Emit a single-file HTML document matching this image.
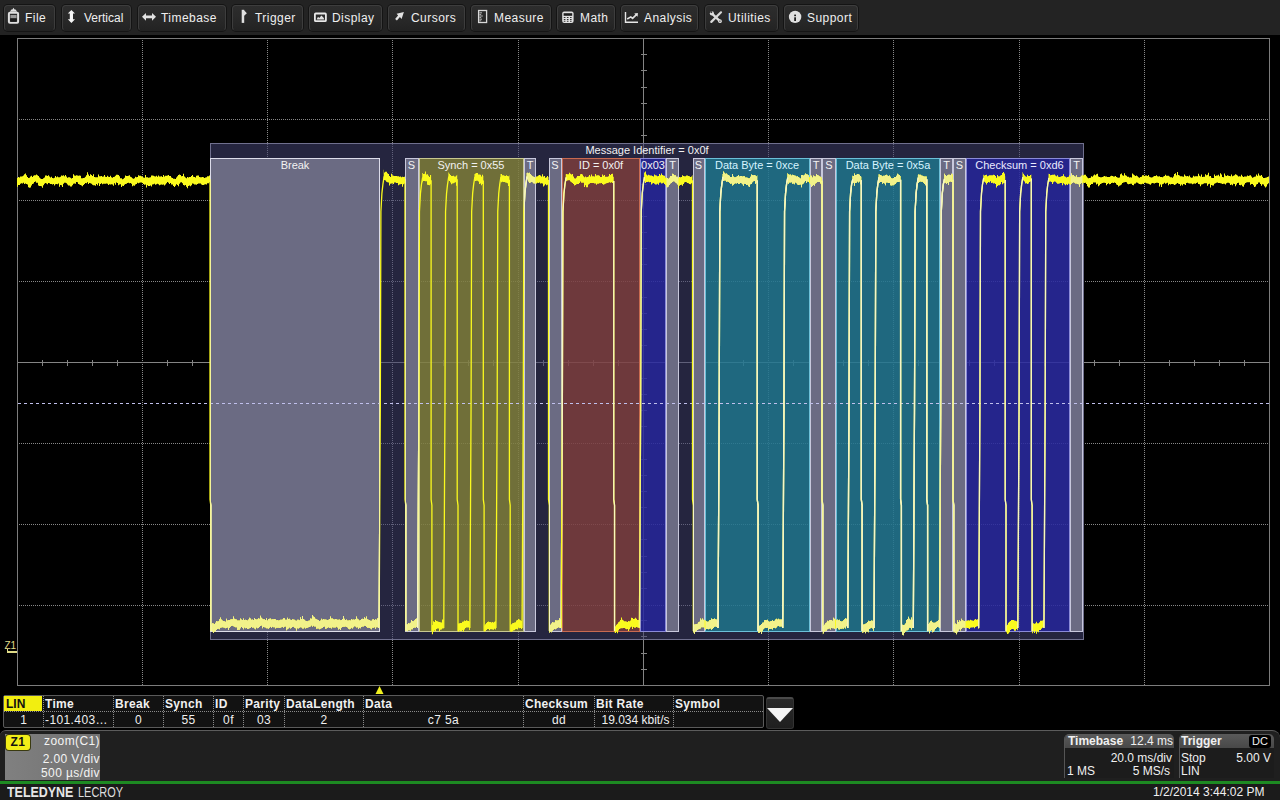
<!DOCTYPE html>
<html><head><meta charset="utf-8"><title>LeCroy LIN decode</title>
<style>
html,body{margin:0;padding:0;width:1280px;height:800px;overflow:hidden;background:#000;font-family:"Liberation Sans",sans-serif;}
#scope{position:absolute;left:0;top:0;}
#top{position:absolute;left:0;top:0;width:1280px;height:35px;background:#232323;}
.btn{position:absolute;top:5px;height:26px;box-sizing:border-box;border-radius:4px;background:linear-gradient(#2d2d2d,#282828 60%,#232323);border:1px solid #3d3d3d;border-bottom-color:#222;box-shadow:0 0 0 1px #141414;color:#efefef;font-size:12px;}
.btn span{position:absolute;left:22px;top:5px;white-space:nowrap;letter-spacing:0.45px;}
.btn svg{position:absolute;}
#tbl{position:absolute;left:3px;top:695px;width:761px;height:33px;box-sizing:border-box;border:1px solid #5a5a5a;border-radius:2px;background:#121212;color:#f0f0f0;font-size:12px;}
.c{position:absolute;top:0;height:31px;box-sizing:border-box;border-left:1px dotted #8a8a8a;}
.c b{position:absolute;left:1px;top:1px;white-space:nowrap;letter-spacing:0.3px;}
.c i{position:absolute;top:17px;font-style:normal;white-space:nowrap;letter-spacing:0.4px;}
#rowsep{position:absolute;left:0;right:0;top:15px;border-top:1px dotted #8a8a8a;}
#lin{position:absolute;left:0;top:0;width:38px;height:15px;background:#f2ee10;color:#111;}
#drop{position:absolute;left:766px;top:697px;width:28px;height:32px;box-sizing:border-box;border-radius:3px;background:linear-gradient(#2a2a2a,#1f1f1f);border:1px solid #333;border-top:2px solid #4a4a4a;}
#panel{position:absolute;left:0;top:730px;width:1280px;height:51px;background:#1f1f1f;border-top:1px solid #5c5c5c;border-radius:6px 8px 0 0;}
#green{position:absolute;left:0;top:781px;width:1280px;height:3px;background:#1d8a22;}
#foot{position:absolute;left:0;top:784px;width:1280px;height:16px;background:#1b1b1b;}
#z1{position:absolute;left:5px;top:734px;width:95px;height:46px;background:linear-gradient(90deg,#808080,#7a7a7a 40%,#727272);color:#f4f4f4;font-size:12px;letter-spacing:0.4px;}
#z1b{position:absolute;left:1px;top:1px;width:24px;height:15px;border-radius:3px;background:#f2ee18;color:#111;font-weight:bold;font-size:12px;text-align:center;line-height:15px;box-shadow:0 0 0 1px #3a3a10;}
.tx{position:absolute;white-space:nowrap;}
.box{position:absolute;top:734px;height:44px;border-radius:5px 5px 0 0;background:#1c1c1c;border-left:1px solid #555;box-sizing:border-box;overflow:hidden;font-size:12px;color:#f0f0f0;}
.hdr{position:absolute;left:0;top:0;right:0;height:14px;background:linear-gradient(#5a5a5a,#484848);}
</style></head><body>
<svg id="scope" width="1280" height="800" viewBox="0 0 1280 800" shape-rendering="crispEdges">
<g opacity="0.85"><line x1="142.5" y1="40" x2="142.5" y2="685" stroke="#a0a0a0" stroke-dasharray="1 1"/><line x1="267.5" y1="40" x2="267.5" y2="685" stroke="#a0a0a0" stroke-dasharray="1 1"/><line x1="392.5" y1="40" x2="392.5" y2="685" stroke="#a0a0a0" stroke-dasharray="1 1"/><line x1="518.5" y1="40" x2="518.5" y2="685" stroke="#a0a0a0" stroke-dasharray="1 1"/><line x1="643.5" y1="38" x2="643.5" y2="685" stroke="#9c9c9c"/><line x1="768.5" y1="40" x2="768.5" y2="685" stroke="#a0a0a0" stroke-dasharray="1 1"/><line x1="893.5" y1="40" x2="893.5" y2="685" stroke="#a0a0a0" stroke-dasharray="1 1"/><line x1="1019.5" y1="40" x2="1019.5" y2="685" stroke="#a0a0a0" stroke-dasharray="1 1"/><line x1="1144.5" y1="40" x2="1144.5" y2="685" stroke="#a0a0a0" stroke-dasharray="1 1"/><line x1="19" y1="119.5" x2="1269" y2="119.5" stroke="#a0a0a0" stroke-dasharray="1 1"/><line x1="19" y1="200.5" x2="1269" y2="200.5" stroke="#a0a0a0" stroke-dasharray="1 1"/><line x1="19" y1="281.5" x2="1269" y2="281.5" stroke="#a0a0a0" stroke-dasharray="1 1"/><line x1="17" y1="362.5" x2="1269" y2="362.5" stroke="#9c9c9c"/><line x1="19" y1="443.5" x2="1269" y2="443.5" stroke="#a0a0a0" stroke-dasharray="1 1"/><line x1="19" y1="524.5" x2="1269" y2="524.5" stroke="#a0a0a0" stroke-dasharray="1 1"/><line x1="19" y1="605.5" x2="1269" y2="605.5" stroke="#a0a0a0" stroke-dasharray="1 1"/><path d="M42.5,360 V366 M67.5,360 V366 M92.5,360 V366 M117.5,360 V366 M167.5,360 V366 M192.5,360 V366 M217.5,360 V366 M242.5,360 V366 M292.5,360 V366 M317.5,360 V366 M343.5,360 V366 M368.5,360 V366 M418.5,360 V366 M443.5,360 V366 M468.5,360 V366 M493.5,360 V366 M543.5,360 V366 M568.5,360 V366 M593.5,360 V366 M618.5,360 V366 M668.5,360 V366 M693.5,360 V366 M718.5,360 V366 M743.5,360 V366 M793.5,360 V366 M818.5,360 V366 M843.5,360 V366 M868.5,360 V366 M918.5,360 V366 M943.5,360 V366 M969.5,360 V366 M994.5,360 V366 M1044.5,360 V366 M1069.5,360 V366 M1094.5,360 V366 M1119.5,360 V366 M1169.5,360 V366 M1194.5,360 V366 M1219.5,360 V366 M1244.5,360 V366 M641,54.5 H646.5 M641,70.5 H646.5 M641,87.5 H646.5 M641,103.5 H646.5 M641,135.5 H646.5 M641,151.5 H646.5 M641,167.5 H646.5 M641,184.5 H646.5 M641,216.5 H646.5 M641,232.5 H646.5 M641,248.5 H646.5 M641,264.5 H646.5 M641,297.5 H646.5 M641,313.5 H646.5 M641,329.5 H646.5 M641,345.5 H646.5 M641,378.5 H646.5 M641,394.5 H646.5 M641,410.5 H646.5 M641,426.5 H646.5 M641,459.5 H646.5 M641,475.5 H646.5 M641,491.5 H646.5 M641,507.5 H646.5 M641,539.5 H646.5 M641,556.5 H646.5 M641,572.5 H646.5 M641,588.5 H646.5 M641,620.5 H646.5 M641,636.5 H646.5 M641,653.5 H646.5 M641,669.5 H646.5" stroke="#9c9c9c" fill="none"/></g>
<rect x="210.5" y="143.5" width="873" height="496" fill="#434373" fill-opacity="0.55" stroke="#70708e"/><rect x="210.5" y="158.5" width="169" height="473" fill="#6b6b83" fill-opacity="1.0" stroke="#dcdcea"/><rect x="405.5" y="158.5" width="13" height="473" fill="#6b6b83" fill-opacity="1.0" stroke="#c8c8dc"/><rect x="419.5" y="158.5" width="103.5" height="473" fill="#8d8c38" fill-opacity="0.72" stroke="#c8c890"/><rect x="524" y="158.5" width="11.5" height="473" fill="#6b6b83" fill-opacity="1.0" stroke="#c8c8dc"/><rect x="549" y="158.5" width="12" height="473" fill="#6b6b83" fill-opacity="1.0" stroke="#c8c8dc"/><rect x="562" y="158.5" width="77.5" height="473" fill="#8a413c" fill-opacity="0.72" stroke="#c86a50"/><rect x="640.5" y="158.5" width="25" height="473" fill="#2626aa" fill-opacity="0.72" stroke="#8a8ad8"/><rect x="666.5" y="158.5" width="12" height="473" fill="#6b6b83" fill-opacity="1.0" stroke="#c8c8dc"/><rect x="693" y="158.5" width="11.5" height="473" fill="#6b6b83" fill-opacity="1.0" stroke="#c8c8dc"/><rect x="705.5" y="158.5" width="103.5" height="473" fill="#1d8299" fill-opacity="0.72" stroke="#6cc0d8"/><rect x="810" y="158.5" width="11.5" height="473" fill="#6b6b83" fill-opacity="1.0" stroke="#c8c8dc"/><rect x="822.5" y="158.5" width="12.5" height="473" fill="#6b6b83" fill-opacity="1.0" stroke="#c8c8dc"/><rect x="836" y="158.5" width="103.5" height="473" fill="#1d8299" fill-opacity="0.72" stroke="#6cc0d8"/><rect x="940.5" y="158.5" width="12" height="473" fill="#6b6b83" fill-opacity="1.0" stroke="#c8c8dc"/><rect x="953.5" y="158.5" width="12" height="473" fill="#6b6b83" fill-opacity="1.0" stroke="#c8c8dc"/><rect x="966.5" y="158.5" width="103" height="473" fill="#2626aa" fill-opacity="0.72" stroke="#8a8ad8"/><rect x="1070.5" y="158.5" width="12" height="473" fill="#6b6b83" fill-opacity="1.0" stroke="#c8c8dc"/>
<line x1="18" y1="403.5" x2="1269" y2="403.5" stroke="#c0c0ec" stroke-dasharray="3 3"/>
<rect x="17.5" y="38.5" width="1252" height="647" fill="none" stroke="#7c7c7c"/>
<defs><path id="tb" d="M17,177.89 L18,177.89 L18,176.98 L19,176.98 L19,177.55 L20,177.55 L20,176.39 L21,176.39 L21,176.4 L22,176.4 L22,176.19 L23,176.19 L23,175.51 L24,175.51 L24,174.15 L25,174.15 L25,173.59 L26,173.59 L26,175.23 L27,175.23 L27,176.94 L28,176.94 L28,177.99 L29,177.99 L29,177.87 L30,177.87 L30,176.59 L31,176.59 L31,175.74 L32,175.74 L32,176.94 L33,176.94 L33,175.68 L34,175.68 L34,175.16 L35,175.16 L35,175.14 L36,175.14 L36,174.59 L37,174.59 L37,175.32 L38,175.32 L38,175.88 L39,175.88 L39,177.52 L40,177.52 L40,178.48 L41,178.48 L41,179.06 L42,179.06 L42,178.93 L43,178.93 L43,178.29 L44,178.29 L44,177.61 L45,177.61 L45,175.41 L46,175.41 L46,175.4 L47,175.4 L47,175.88 L48,175.88 L48,175.19 L49,175.19 L49,176.58 L50,176.58 L50,177.57 L51,177.57 L51,176.77 L52,176.77 L52,178.1 L53,178.1 L53,178.31 L54,178.31 L54,177.7 L55,177.7 L55,176.1 L56,176.1 L56,177.3 L57,177.3 L57,176.44 L58,176.44 L58,177.22 L59,177.22 L59,177.24 L60,177.24 L60,176.72 L61,176.72 L61,175.59 L62,175.59 L62,175.63 L63,175.63 L63,175.37 L64,175.37 L64,176.32 L65,176.32 L65,175.1 L66,175.1 L66,176.6 L67,176.6 L67,177.67 L68,177.67 L68,177.34 L69,177.34 L69,177.22 L70,177.22 L70,177.7 L71,177.7 L71,178.48 L72,178.48 L72,178.07 L73,178.07 L73,174.34 L74,174.34 L74,175.61 L75,175.61 L75,175.84 L76,175.84 L76,175.18 L77,175.18 L77,175.49 L78,175.49 L78,175.81 L79,175.81 L79,175.61 L80,175.61 L80,175.82 L81,175.82 L81,178.37 L82,178.37 L82,178.3 L83,178.3 L83,177.98 L84,177.98 L84,177.64 L85,177.64 L85,176.75 L86,176.75 L86,175.24 L87,175.24 L87,172.15 L88,172.15 L88,174.48 L89,174.48 L89,175.97 L90,175.97 L90,174.21 L91,174.21 L91,174.89 L92,174.89 L92,176.09 L93,176.09 L93,174.36 L94,174.36 L94,176.99 L95,176.99 L95,177.33 L96,177.33 L96,177.23 L97,177.23 L97,177.37 L98,177.37 L98,174.5 L99,174.5 L99,176.15 L100,176.15 L100,176.28 L101,176.28 L101,176.11 L102,176.11 L102,176.76 L103,176.76 L103,176.59 L104,176.59 L104,175.04 L105,175.04 L105,176.72 L106,176.72 L106,177.1 L107,177.1 L107,175.71 L108,175.71 L108,176.78 L109,176.78 L109,176.97 L110,176.97 L110,175.84 L111,175.84 L111,177.36 L112,177.36 L112,177.75 L113,177.75 L113,176.98 L114,176.98 L114,176.74 L115,176.74 L115,175.67 L116,175.67 L116,174.7 L117,174.7 L117,174.69 L118,174.69 L118,175.09 L119,175.09 L119,176.29 L120,176.29 L120,178.16 L121,178.16 L121,178.18 L122,178.18 L122,179.15 L123,179.15 L123,178.76 L124,178.76 L124,177.74 L125,177.74 L125,175.56 L126,175.56 L126,176.11 L127,176.11 L127,175.88 L128,175.88 L128,175.79 L129,175.79 L129,175.25 L130,175.25 L130,176.82 L131,176.82 L131,177.29 L132,177.29 L132,178.28 L133,178.28 L133,178.87 L134,178.87 L134,178.36 L135,178.36 L135,176.73 L136,176.73 L136,177.37 L137,177.37 L137,177.08 L138,177.08 L138,175.34 L139,175.34 L139,175.8 L140,175.8 L140,175.67 L141,175.67 L141,176.28 L142,176.28 L142,176.69 L143,176.69 L143,177.45 L144,177.45 L144,177.75 L145,177.75 L145,174.89 L146,174.89 L146,177.33 L147,177.33 L147,177.33 L148,177.33 L148,177.66 L149,177.66 L149,177.54 L150,177.54 L150,177.37 L151,177.37 L151,175.62 L152,175.62 L152,175.45 L153,175.45 L153,175.64 L154,175.64 L154,176.2 L155,176.2 L155,176.4 L156,176.4 L156,175.85 L157,175.85 L157,176.71 L158,176.71 L158,175.46 L159,175.46 L159,176.38 L160,176.38 L160,176.44 L161,176.44 L161,176.27 L162,176.27 L162,177.03 L163,177.03 L163,175.03 L164,175.03 L164,176.39 L165,176.39 L165,175.63 L166,175.63 L166,175.84 L167,175.84 L167,175.54 L168,175.54 L168,175.02 L169,175.02 L169,176.06 L170,176.06 L170,176.04 L171,176.04 L171,177.53 L172,177.53 L172,177.94 L173,177.94 L173,178.65 L174,178.65 L174,178.73 L175,178.73 L175,178.9 L176,178.9 L176,177.54 L177,177.54 L177,176.33 L178,176.33 L178,175.12 L179,175.12 L179,174.52 L180,174.52 L180,175.09 L181,175.09 L181,176.28 L182,176.28 L182,176.02 L183,176.02 L183,173.83 L184,173.83 L184,176.54 L185,176.54 L185,177.54 L186,177.54 L186,178.25 L187,178.25 L187,177.09 L188,177.09 L188,177.54 L189,177.54 L189,177.1 L190,177.1 L190,176.9 L191,176.9 L191,176.04 L192,176.04 L192,174.97 L193,174.97 L193,176.76 L194,176.76 L194,176.93 L195,176.93 L195,177.52 L196,177.52 L196,175.87 L197,175.87 L197,175.45 L198,175.45 L198,175.57 L199,175.57 L199,176.9 L200,176.9 L200,177.17 L201,177.17 L201,177.34 L202,177.34 L202,177.04 L203,177.04 L203,177.16 L204,177.16 L204,177.94 L205,177.94 L205,177.55 L206,177.55 L206,177.24 L207,177.24 L207,176.24 L208,176.24 L208,176.22 L209,176.22 L209,175.41 L210,175.41 L210,182.37 L209,182.37 L209,183.37 L208,183.37 L208,183.26 L207,183.26 L207,184.42 L206,184.42 L206,184.16 L205,184.16 L205,184.38 L204,184.38 L204,184.96 L203,184.96 L203,184.94 L202,184.94 L202,184.59 L201,184.59 L201,183.47 L200,183.47 L200,183.4 L199,183.4 L199,183.52 L198,183.52 L198,183.88 L197,183.88 L197,184.65 L196,184.65 L196,184.62 L195,184.62 L195,184.52 L194,184.52 L194,183.8 L193,183.8 L193,183.54 L192,183.54 L192,185.13 L191,185.13 L191,186.13 L190,186.13 L190,185.43 L189,185.43 L189,185.89 L188,185.89 L188,188.37 L187,188.37 L187,186.63 L186,186.63 L186,184.97 L185,184.97 L185,185.55 L184,185.55 L184,185.02 L183,185.02 L183,183.16 L182,183.16 L182,182.32 L181,182.32 L181,182.4 L180,182.4 L180,183.72 L179,183.72 L179,186.23 L178,186.23 L178,185.09 L177,185.09 L177,184.34 L176,184.34 L176,185.65 L175,185.65 L175,187.1 L174,187.1 L174,186 L173,186 L173,184.5 L172,184.5 L172,184.48 L171,184.48 L171,183.09 L170,183.09 L170,184.05 L169,184.05 L169,182.87 L168,182.87 L168,182.08 L167,182.08 L167,183.2 L166,183.2 L166,184.56 L165,184.56 L165,185.61 L164,185.61 L164,184.52 L163,184.52 L163,184.75 L162,184.75 L162,184.56 L161,184.56 L161,184.7 L160,184.7 L160,185.36 L159,185.36 L159,184.13 L158,184.13 L158,183.64 L157,183.64 L157,184.19 L156,184.19 L156,184.85 L155,184.85 L155,183.67 L154,183.67 L154,184.14 L153,184.14 L153,184.5 L152,184.5 L152,186.42 L151,186.42 L151,185.58 L150,185.58 L150,185.94 L149,185.94 L149,185.94 L148,185.94 L148,185.28 L147,185.28 L147,187.6 L146,187.6 L146,184.41 L145,184.41 L145,184.75 L144,184.75 L144,183.92 L143,183.92 L143,182.93 L142,182.93 L142,182.38 L141,182.38 L141,182.38 L140,182.38 L140,182.69 L139,182.69 L139,183.16 L138,183.16 L138,182.74 L137,182.74 L137,183.88 L136,183.88 L136,184.48 L135,184.48 L135,185.66 L134,185.66 L134,185.44 L133,185.44 L133,186.35 L132,186.35 L132,183.8 L131,183.8 L131,183.05 L130,183.05 L130,183.27 L129,183.27 L129,182.73 L128,182.73 L128,183.09 L127,183.09 L127,183.76 L126,183.76 L126,183.88 L125,183.88 L125,184.77 L124,184.77 L124,185.94 L123,185.94 L123,185.71 L122,185.71 L122,186.88 L121,186.88 L121,184.3 L120,184.3 L120,184.4 L119,184.4 L119,185.33 L118,185.33 L118,182.93 L117,182.93 L117,182.6 L116,182.6 L116,184.87 L115,184.87 L115,183.37 L114,183.37 L114,185.86 L113,185.86 L113,184.61 L112,184.61 L112,184.33 L111,184.33 L111,184.54 L110,184.54 L110,184.16 L109,184.16 L109,185.12 L108,185.12 L108,183.74 L107,183.74 L107,183.42 L106,183.42 L106,183.82 L105,183.82 L105,183.74 L104,183.74 L104,183.67 L103,183.67 L103,184.2 L102,184.2 L102,183.31 L101,183.31 L101,184.06 L100,184.06 L100,186.01 L99,186.01 L99,183.36 L98,183.36 L98,185.16 L97,185.16 L97,184.07 L96,184.07 L96,185.81 L95,185.81 L95,185.23 L94,185.23 L94,185.21 L93,185.21 L93,184.84 L92,184.84 L92,183.84 L91,183.84 L91,183.35 L90,183.35 L90,182.89 L89,182.89 L89,183.91 L88,183.91 L88,182.26 L87,182.26 L87,183.24 L86,183.24 L86,183 L85,183 L85,184.01 L84,184.01 L84,184.99 L83,184.99 L83,186.29 L82,186.29 L82,185.39 L81,185.39 L81,185.02 L80,185.02 L80,184.58 L79,184.58 L79,184.08 L78,184.08 L78,182.25 L77,182.25 L77,182.12 L76,182.12 L76,183.68 L75,183.68 L75,183.6 L74,183.6 L74,183.74 L73,183.74 L73,185.25 L72,185.25 L72,186.52 L71,186.52 L71,186.42 L70,186.42 L70,185.55 L69,185.55 L69,185.38 L68,185.38 L68,184.39 L67,184.39 L67,183.23 L66,183.23 L66,182.7 L65,182.7 L65,182.63 L64,182.63 L64,183.66 L63,183.66 L63,186.95 L62,186.95 L62,185.3 L61,185.3 L61,185.07 L60,185.07 L60,186.66 L59,186.66 L59,183.58 L58,183.58 L58,184.13 L57,184.13 L57,183.94 L56,183.94 L56,184.16 L55,184.16 L55,185.56 L54,185.56 L54,184.08 L53,184.08 L53,184.5 L52,184.5 L52,183.99 L51,183.99 L51,184.02 L50,184.02 L50,183.25 L49,183.25 L49,183.08 L48,183.08 L48,184.3 L47,184.3 L47,183.61 L46,183.61 L46,182.9 L45,182.9 L45,183.87 L44,183.87 L44,185.19 L43,185.19 L43,187.74 L42,187.74 L42,186.21 L41,186.21 L41,185.97 L40,185.97 L40,185.89 L39,185.89 L39,185.54 L38,185.54 L38,182.84 L37,182.84 L37,182.85 L36,182.85 L36,181.53 L35,181.53 L35,182.12 L34,182.12 L34,183.44 L33,183.44 L33,183.97 L32,183.97 L32,185.55 L31,185.55 L31,187.4 L30,187.4 L30,187.69 L29,187.69 L29,187.23 L28,187.23 L28,184.61 L27,184.61 L27,183.97 L26,183.97 L26,183.56 L25,183.56 L25,184.1 L24,184.1 L24,182.63 L23,182.63 L23,183.58 L22,183.58 L22,183.14 L21,183.14 L21,183.74 L20,183.74 L20,184.98 L19,184.98 L19,185.12 L18,185.12 L18,186.64 L17,186.64Z M210.8,624.4 L211,624.4 L211,624.39 L212,624.39 L212,623.33 L213,623.33 L213,623.38 L214,623.38 L214,623.96 L215,623.96 L215,622.84 L216,622.84 L216,621.07 L217,621.07 L217,621.47 L218,621.47 L218,621.13 L219,621.13 L219,619.25 L220,619.25 L220,617.53 L221,617.53 L221,619.42 L222,619.42 L222,620.55 L223,620.55 L223,621.04 L224,621.04 L224,621.35 L225,621.35 L225,621.67 L226,621.67 L226,618.78 L227,618.78 L227,620.49 L228,620.49 L228,619.9 L229,619.9 L229,619.98 L230,619.98 L230,619.58 L231,619.58 L231,619.25 L232,619.25 L232,619.37 L233,619.37 L233,616.45 L234,616.45 L234,618.84 L235,618.84 L235,619.29 L236,619.29 L236,619.54 L237,619.54 L237,620.56 L238,620.56 L238,620.55 L239,620.55 L239,620.47 L240,620.47 L240,618.6 L241,618.6 L241,619.5 L242,619.5 L242,620.04 L243,620.04 L243,618.55 L244,618.55 L244,619.89 L245,619.89 L245,619.73 L246,619.73 L246,620 L247,620 L247,620.47 L248,620.47 L248,619.59 L249,619.59 L249,617.71 L250,617.71 L250,618.61 L251,618.61 L251,619.71 L252,619.71 L252,619.42 L253,619.42 L253,619.99 L254,619.99 L254,617.96 L255,617.96 L255,618.91 L256,618.91 L256,619.38 L257,619.38 L257,619.35 L258,619.35 L258,618.2 L259,618.2 L259,618.84 L260,618.84 L260,615.69 L261,615.69 L261,617.87 L262,617.87 L262,618.87 L263,618.87 L263,619.14 L264,619.14 L264,619.26 L265,619.26 L265,619.98 L266,619.98 L266,618.23 L267,618.23 L267,620.45 L268,620.45 L268,618.94 L269,618.94 L269,618.79 L270,618.79 L270,618.41 L271,618.41 L271,619.49 L272,619.49 L272,619.14 L273,619.14 L273,619.19 L274,619.19 L274,618.95 L275,618.95 L275,619.19 L276,619.19 L276,620.15 L277,620.15 L277,619.88 L278,619.88 L278,620.57 L279,620.57 L279,620.35 L280,620.35 L280,619.7 L281,619.7 L281,619.69 L282,619.69 L282,619.48 L283,619.48 L283,618.27 L284,618.27 L284,618.31 L285,618.31 L285,619.67 L286,619.67 L286,619.71 L287,619.71 L287,617.7 L288,617.7 L288,619 L289,619 L289,618.78 L290,618.78 L290,619.74 L291,619.74 L291,619.9 L292,619.9 L292,619.35 L293,619.35 L293,619.44 L294,619.44 L294,619.77 L295,619.77 L295,620.54 L296,620.54 L296,620.72 L297,620.72 L297,619.77 L298,619.77 L298,619.86 L299,619.86 L299,620.36 L300,620.36 L300,617.17 L301,617.17 L301,619 L302,619 L302,615.95 L303,615.95 L303,618.91 L304,618.91 L304,619.78 L305,619.78 L305,620.7 L306,620.7 L306,620.98 L307,620.98 L307,621.22 L308,621.22 L308,620.74 L309,620.74 L309,620.51 L310,620.51 L310,618.56 L311,618.56 L311,618.63 L312,618.63 L312,614.99 L313,614.99 L313,616.57 L314,616.57 L314,617.23 L315,617.23 L315,618.65 L316,618.65 L316,619.22 L317,619.22 L317,619.81 L318,619.81 L318,620.04 L319,620.04 L319,620.9 L320,620.9 L320,620.5 L321,620.5 L321,618.75 L322,618.75 L322,619.7 L323,619.7 L323,619.07 L324,619.07 L324,619.49 L325,619.49 L325,619.54 L326,619.54 L326,619.74 L327,619.74 L327,619.88 L328,619.88 L328,619.68 L329,619.68 L329,619.04 L330,619.04 L330,616.42 L331,616.42 L331,618.58 L332,618.58 L332,618.54 L333,618.54 L333,619.28 L334,619.28 L334,619.49 L335,619.49 L335,619.08 L336,619.08 L336,619.13 L337,619.13 L337,619.63 L338,619.63 L338,619.87 L339,619.87 L339,619.59 L340,619.59 L340,620.23 L341,620.23 L341,620.12 L342,620.12 L342,619.07 L343,619.07 L343,615.93 L344,615.93 L344,618.85 L345,618.85 L345,619.98 L346,619.98 L346,619.56 L347,619.56 L347,620.62 L348,620.62 L348,620.49 L349,620.49 L349,620.37 L350,620.37 L350,620.49 L351,620.49 L351,619.11 L352,619.11 L352,619.83 L353,619.83 L353,619.38 L354,619.38 L354,619.76 L355,619.76 L355,619.07 L356,619.07 L356,616.46 L357,616.46 L357,618.66 L358,618.66 L358,619.46 L359,619.46 L359,620.55 L360,620.55 L360,620 L361,620 L361,618.98 L362,618.98 L362,618.75 L363,618.75 L363,618.92 L364,618.92 L364,617.19 L365,617.19 L365,618.58 L366,618.58 L366,616.54 L367,616.54 L367,619.19 L368,619.19 L368,619.63 L369,619.63 L369,620 L370,620 L370,620.66 L371,620.66 L371,620.63 L372,620.63 L372,619.51 L373,619.51 L373,619.27 L374,619.27 L374,620.01 L375,620.01 L375,619.28 L376,619.28 L376,619.81 L377,619.81 L377,618.28 L378,618.28 L378,618.21 L379,618.21 L379,619.33 L379.1,619.33 L379.1,628.54 L379,628.54 L379,627.78 L378,627.78 L378,627.22 L377,627.22 L377,627.22 L376,627.22 L376,628.89 L375,628.89 L375,627.32 L374,627.32 L374,627.83 L373,627.83 L373,627.76 L372,627.76 L372,629.26 L371,629.26 L371,628.43 L370,628.43 L370,627.94 L369,627.94 L369,627.7 L368,627.7 L368,627.78 L367,627.78 L367,626.97 L366,626.97 L366,626.1 L365,626.1 L365,625.66 L364,625.66 L364,626.38 L363,626.38 L363,626.56 L362,626.56 L362,627.06 L361,627.06 L361,628.33 L360,628.33 L360,627.77 L359,627.77 L359,629.06 L358,629.06 L358,627.26 L357,627.26 L357,627.48 L356,627.48 L356,626.59 L355,626.59 L355,626.33 L354,626.33 L354,627.33 L353,627.33 L353,628.62 L352,628.62 L352,627.71 L351,627.71 L351,628.69 L350,628.69 L350,629.15 L349,629.15 L349,628.85 L348,628.85 L348,627.57 L347,627.57 L347,627.12 L346,627.12 L346,626.51 L345,626.51 L345,626.67 L344,626.67 L344,626.79 L343,626.79 L343,626.9 L342,626.9 L342,627.8 L341,627.8 L341,630.05 L340,630.05 L340,628.65 L339,628.65 L339,629.52 L338,629.52 L338,627.55 L337,627.55 L337,626.86 L336,626.86 L336,627.46 L335,627.46 L335,627.61 L334,627.61 L334,627.38 L333,627.38 L333,627.17 L332,627.17 L332,628.41 L331,628.41 L331,627.76 L330,627.76 L330,627.98 L329,627.98 L329,627.35 L328,627.35 L328,627.96 L327,627.96 L327,628.44 L326,628.44 L326,628.82 L325,628.82 L325,626.56 L324,626.56 L324,626.93 L323,626.93 L323,627.93 L322,627.93 L322,628.27 L321,628.27 L321,628.7 L320,628.7 L320,629.31 L319,629.31 L319,628.41 L318,628.41 L318,628.46 L317,628.46 L317,628.68 L316,628.68 L316,626.43 L315,626.43 L315,626.56 L314,626.56 L314,625.67 L313,625.67 L313,626.78 L312,626.78 L312,625.57 L311,625.57 L311,626.44 L310,626.44 L310,627.09 L309,627.09 L309,627.33 L308,627.33 L308,627.87 L307,627.87 L307,627.95 L306,627.95 L306,628.41 L305,628.41 L305,627.52 L304,627.52 L304,628.52 L303,628.52 L303,628.51 L302,628.51 L302,627.41 L301,627.41 L301,627.31 L300,627.31 L300,627.64 L299,627.64 L299,628.47 L298,628.47 L298,628.19 L297,628.19 L297,630.43 L296,630.43 L296,628.15 L295,628.15 L295,627.68 L294,627.68 L294,626.71 L293,626.71 L293,626.94 L292,626.94 L292,628.03 L291,628.03 L291,628.49 L290,628.49 L290,627.5 L289,627.5 L289,628.52 L288,628.52 L288,629.36 L287,629.36 L287,630.24 L286,630.24 L286,626.55 L285,626.55 L285,626.69 L284,626.69 L284,627.84 L283,627.84 L283,627.01 L282,627.01 L282,627.3 L281,627.3 L281,627.71 L280,627.71 L280,628.04 L279,628.04 L279,627.79 L278,627.79 L278,627.82 L277,627.82 L277,627.66 L276,627.66 L276,628.53 L275,628.53 L275,627.19 L274,627.19 L274,627.19 L273,627.19 L273,626.63 L272,626.63 L272,628.12 L271,628.12 L271,626.72 L270,626.72 L270,627.79 L269,627.79 L269,628.66 L268,628.66 L268,628.21 L267,628.21 L267,628.17 L266,628.17 L266,627.62 L265,627.62 L265,627.3 L264,627.3 L264,626.94 L263,626.94 L263,628.21 L262,628.21 L262,625.54 L261,625.54 L261,626.11 L260,626.11 L260,627.03 L259,627.03 L259,628.06 L258,628.06 L258,628.27 L257,628.27 L257,627.61 L256,627.61 L256,629.22 L255,629.22 L255,628.4 L254,628.4 L254,627.5 L253,627.5 L253,627.63 L252,627.63 L252,627.1 L251,627.1 L251,628 L250,628 L250,628.15 L249,628.15 L249,628.69 L248,628.69 L248,628.97 L247,628.97 L247,627.92 L246,627.92 L246,628.36 L245,628.36 L245,627.57 L244,627.57 L244,629.35 L243,629.35 L243,627.91 L242,627.91 L242,626.98 L241,626.98 L241,628.27 L240,628.27 L240,629.74 L239,629.74 L239,629.66 L238,629.66 L238,630.06 L237,630.06 L237,627.2 L236,627.2 L236,627.24 L235,627.24 L235,626.75 L234,626.75 L234,626.17 L233,626.17 L233,625.77 L232,625.77 L232,626.02 L231,626.02 L231,626.75 L230,626.75 L230,627.96 L229,627.96 L229,629.94 L228,629.94 L228,627.62 L227,627.62 L227,628.08 L226,628.08 L226,628.16 L225,628.16 L225,627.81 L224,627.81 L224,627.57 L223,627.57 L223,627.24 L222,627.24 L222,627.6 L221,627.6 L221,627.78 L220,627.78 L220,629.27 L219,629.27 L219,628.79 L218,628.79 L218,629.11 L217,629.11 L217,630.1 L216,630.1 L216,631.28 L215,631.28 L215,631.5 L214,631.5 L214,632.8 L213,632.8 L213,631.38 L212,631.38 L212,631.01 L211,631.01 L211,631.39 L210.8,631.39Z M383.7,169.78 L384,169.78 L384,172.59 L385,172.59 L385,171.76 L386,171.76 L386,171.68 L387,171.68 L387,173.31 L388,173.31 L388,173.95 L389,173.95 L389,175.94 L390,175.94 L390,176.9 L391,176.9 L391,173.81 L392,173.81 L392,175.35 L393,175.35 L393,175.74 L394,175.74 L394,176.03 L395,176.03 L395,175.91 L396,175.91 L396,175.96 L397,175.96 L397,176.32 L398,176.32 L398,176.31 L399,176.31 L399,176.81 L400,176.81 L400,176.53 L401,176.53 L401,177.14 L402,177.14 L402,176.86 L403,176.86 L403,176.91 L404,176.91 L404,176.66 L405,176.66 L405,183.62 L404,183.62 L404,184.13 L403,184.13 L403,186.64 L402,186.64 L402,183.92 L401,183.92 L401,184.27 L400,184.27 L400,184.5 L399,184.5 L399,185.2 L398,185.2 L398,183.12 L397,183.12 L397,182.97 L396,182.97 L396,182.42 L395,182.42 L395,182.49 L394,182.49 L394,184.02 L393,184.02 L393,183.38 L392,183.38 L392,183.38 L391,183.38 L391,183.71 L390,183.71 L390,185.54 L389,185.54 L389,182.44 L388,182.44 L388,182.13 L387,182.13 L387,181.7 L386,181.7 L386,180.47 L385,180.47 L385,179.93 L384,179.93 L384,181.44 L383.7,181.44Z M405.8,624.87 L406,624.87 L406,624.52 L407,624.52 L407,624.14 L408,624.14 L408,623.12 L409,623.12 L409,623.38 L410,623.38 L410,622.7 L411,622.7 L411,620.11 L412,620.11 L412,621.1 L413,621.1 L413,621.33 L414,621.33 L414,620.23 L415,620.23 L415,619.02 L416,619.02 L416,618.6 L417,618.6 L417,620.1 L417.65,620.1 L417.65,627.05 L417,627.05 L417,627.11 L416,627.11 L416,627.73 L415,627.73 L415,627.4 L414,627.4 L414,628.09 L413,628.09 L413,629.37 L412,629.37 L412,629.33 L411,629.33 L411,630.63 L410,630.63 L410,630.22 L409,630.22 L409,630.3 L408,630.3 L408,631.24 L407,631.24 L407,630.94 L406,630.94 L406,631.4 L405.8,631.4Z M422.25,172.93 L423,172.93 L423,174.08 L424,174.08 L424,173.81 L425,173.81 L425,171.47 L426,171.47 L426,174.38 L427,174.38 L427,174.33 L428,174.33 L428,175.87 L429,175.87 L429,176.95 L430,176.95 L430,175.08 L431,175.08 L431,175.15 L431.1,175.15 L431.1,186.15 L431,186.15 L431,184.37 L430,184.37 L430,185.2 L429,185.2 L429,184.97 L428,184.97 L428,184.69 L427,184.69 L427,181.19 L426,181.19 L426,181.18 L425,181.18 L425,181 L424,181 L424,181.1 L423,181.1 L423,182.37 L422.25,182.37Z M431.9,624.64 L432,624.64 L432,625.05 L433,625.05 L433,621.21 L434,621.21 L434,621.96 L435,621.96 L435,620.03 L436,620.03 L436,621.02 L437,621.02 L437,621.34 L438,621.34 L438,621.74 L439,621.74 L439,622 L440,622 L440,622.28 L441,622.28 L441,622.57 L442,622.57 L442,619.4 L443,619.4 L443,619.96 L443.75,619.96 L443.75,628.38 L443,628.38 L443,628.6 L442,628.6 L442,629.43 L441,629.43 L441,629.82 L440,629.82 L440,631.22 L439,631.22 L439,628.56 L438,628.56 L438,628.4 L437,628.4 L437,628.98 L436,628.98 L436,631.21 L435,631.21 L435,630.4 L434,630.4 L434,631.83 L433,631.83 L433,634.13 L432,634.13 L432,634.41 L431.9,634.41Z M448.35,172.5 L449,172.5 L449,173.73 L450,173.73 L450,174.91 L451,174.91 L451,176.02 L452,176.02 L452,176.02 L453,176.02 L453,175.78 L454,175.78 L454,176.39 L455,176.39 L455,176.43 L456,176.43 L456,175.58 L457,175.58 L457,174.7 L457.2,174.7 L457.2,183.15 L457,183.15 L457,185.71 L456,185.71 L456,182.25 L455,182.25 L455,182.65 L454,182.65 L454,183.33 L453,183.33 L453,183.38 L452,183.38 L452,184.19 L451,184.19 L451,182.51 L450,182.51 L450,180.89 L449,180.89 L449,179.93 L448.35,179.93Z M458,623.41 L459,623.41 L459,623.25 L460,623.25 L460,623.02 L461,623.02 L461,623.04 L462,623.04 L462,621.78 L463,621.78 L463,621.49 L464,621.49 L464,620.61 L465,620.61 L465,620.96 L466,620.96 L466,620.16 L467,620.16 L467,620.84 L468,620.84 L468,620.9 L469,620.9 L469,621.45 L469.85,621.45 L469.85,629.88 L469,629.88 L469,627.47 L468,627.47 L468,627.55 L467,627.55 L467,627.52 L466,627.52 L466,628.11 L465,628.11 L465,629.57 L464,629.57 L464,631.86 L463,631.86 L463,630.3 L462,630.3 L462,631.13 L461,631.13 L461,631.05 L460,631.05 L460,630.76 L459,630.76 L459,631.7 L458,631.7Z M474.45,174.07 L475,174.07 L475,173.6 L476,173.6 L476,173 L477,173 L477,173.12 L478,173.12 L478,174.43 L479,174.43 L479,174.61 L480,174.61 L480,174.73 L481,174.73 L481,176.44 L482,176.44 L482,174.74 L483,174.74 L483,176.02 L483.3,176.02 L483.3,183.84 L483,183.84 L483,183.95 L482,183.95 L482,185.33 L481,185.33 L481,183.42 L480,183.42 L480,184.11 L479,184.11 L479,181.51 L478,181.51 L478,180.84 L477,180.84 L477,180.85 L476,180.85 L476,180.95 L475,180.95 L475,179.89 L474.45,179.89Z M484.1,625.57 L485,625.57 L485,624.33 L486,624.33 L486,623.06 L487,623.06 L487,622.04 L488,622.04 L488,621.39 L489,621.39 L489,621.9 L490,621.9 L490,621.91 L491,621.91 L491,622.54 L492,622.54 L492,622.07 L493,622.07 L493,622.42 L494,622.42 L494,621.83 L495,621.83 L495,621.16 L495.95,621.16 L495.95,629.59 L495,629.59 L495,628.87 L494,628.87 L494,629.76 L493,629.76 L493,629.53 L492,629.53 L492,629.18 L491,629.18 L491,629.35 L490,629.35 L490,630.16 L489,630.16 L489,628.99 L488,628.99 L488,628.96 L487,628.96 L487,629.96 L486,629.96 L486,631.03 L485,631.03 L485,631.66 L484.1,631.66Z M500.55,173.92 L501,173.92 L501,174.12 L502,174.12 L502,175.21 L503,175.21 L503,175.3 L504,175.3 L504,175.73 L505,175.73 L505,175.88 L506,175.88 L506,175.16 L507,175.16 L507,176 L508,176 L508,176.23 L509,176.23 L509,175.53 L509.4,175.53 L509.4,183.45 L509,183.45 L509,186.04 L508,186.04 L508,183.31 L507,183.31 L507,182.87 L506,182.87 L506,182.4 L505,182.4 L505,182.12 L504,182.12 L504,181.88 L503,181.88 L503,181.7 L502,181.7 L502,182.28 L501,182.28 L501,179.92 L500.55,179.92Z M510.2,624.7 L511,624.7 L511,624.24 L512,624.24 L512,623.26 L513,623.26 L513,623.01 L514,623.01 L514,622.6 L515,622.6 L515,622.34 L516,622.34 L516,620.47 L517,620.47 L517,620.09 L518,620.09 L518,618.96 L519,618.96 L519,619.6 L520,619.6 L520,620.32 L521,620.32 L521,621.11 L522,621.11 L522,620.26 L522.05,620.26 L522.05,629.41 L522,629.41 L522,628.92 L521,628.92 L521,627.97 L520,627.97 L520,628.13 L519,628.13 L519,627.85 L518,627.85 L518,629.38 L517,629.38 L517,628.98 L516,628.98 L516,629.21 L515,629.21 L515,630.14 L514,630.14 L514,630.4 L513,630.4 L513,631.13 L512,631.13 L512,631.89 L511,631.89 L511,631.71 L510.2,631.71Z M526.65,172.95 L527,172.95 L527,172.79 L528,172.79 L528,173.16 L529,173.16 L529,172.71 L530,172.71 L530,174.04 L531,174.04 L531,175.24 L532,175.24 L532,176.15 L533,176.15 L533,176.79 L534,176.79 L534,176.97 L535,176.97 L535,177.65 L536,177.65 L536,176.57 L537,176.57 L537,176.27 L538,176.27 L538,175.44 L539,175.44 L539,175.01 L540,175.01 L540,175.61 L541,175.61 L541,176.49 L542,176.49 L542,174.34 L543,174.34 L543,176.45 L544,176.45 L544,176.08 L545,176.08 L545,177.67 L546,177.67 L546,177.36 L547,177.36 L547,176.12 L548,176.12 L548,177.06 L548.5,177.06 L548.5,184.11 L548,184.11 L548,184.84 L547,184.84 L547,185.16 L546,185.16 L546,184.35 L545,184.35 L545,185.41 L544,185.41 L544,186.56 L543,186.56 L543,183.44 L542,183.44 L542,183.29 L541,183.29 L541,183.61 L540,183.61 L540,182.38 L539,182.38 L539,183.08 L538,183.08 L538,182.75 L537,182.75 L537,183.49 L536,183.49 L536,183.34 L535,183.34 L535,183.53 L534,183.53 L534,183.3 L533,183.3 L533,182.34 L532,182.34 L532,182.07 L531,182.07 L531,182.62 L530,182.62 L530,183.03 L529,183.03 L529,181.43 L528,181.43 L528,179.28 L527,179.28 L527,179.46 L526.65,179.46Z M549.3,625.02 L550,625.02 L550,624.77 L551,624.77 L551,623.58 L552,623.58 L552,621.98 L553,621.98 L553,622.39 L554,622.39 L554,622.49 L555,622.49 L555,620.23 L556,620.23 L556,620.53 L557,620.53 L557,620.51 L558,620.51 L558,620.23 L559,620.23 L559,618.36 L560,618.36 L560,619.45 L561,619.45 L561,620.45 L561.15,620.45 L561.15,629.52 L561,629.52 L561,627.73 L560,627.73 L560,627.64 L559,627.64 L559,627.16 L558,627.16 L558,627.95 L557,627.95 L557,628.46 L556,628.46 L556,629.18 L555,629.18 L555,629.02 L554,629.02 L554,629.87 L553,629.87 L553,630.71 L552,630.71 L552,632.28 L551,632.28 L551,631.68 L550,631.68 L550,632.85 L549.3,632.85Z M565.75,174.2 L566,174.2 L566,174.09 L567,174.09 L567,174.13 L568,174.13 L568,174.31 L569,174.31 L569,172.72 L570,172.72 L570,173.81 L571,173.81 L571,174.53 L572,174.53 L572,174.05 L573,174.05 L573,176.62 L574,176.62 L574,178.22 L575,178.22 L575,178.58 L576,178.58 L576,177.42 L577,177.42 L577,176 L578,176 L578,175.92 L579,175.92 L579,176 L580,176 L580,174.37 L581,174.37 L581,173.97 L582,173.97 L582,174.62 L583,174.62 L583,176.36 L584,176.36 L584,177.33 L585,177.33 L585,176.38 L586,176.38 L586,177.24 L587,177.24 L587,177.05 L588,177.05 L588,176.39 L589,176.39 L589,175.1 L590,175.1 L590,176.44 L591,176.44 L591,174.4 L592,174.4 L592,176.21 L593,176.21 L593,176.33 L594,176.33 L594,176.59 L595,176.59 L595,174.07 L596,174.07 L596,175.4 L597,175.4 L597,175.37 L598,175.37 L598,175.25 L599,175.25 L599,175.74 L600,175.74 L600,176.93 L601,176.93 L601,177.06 L602,177.06 L602,174.62 L603,174.62 L603,175.76 L604,175.76 L604,175.04 L605,175.04 L605,176.87 L606,176.87 L606,176.84 L607,176.84 L607,176.82 L608,176.82 L608,176.17 L609,176.17 L609,173.94 L610,173.94 L610,175 L611,175 L611,173.94 L612,173.94 L612,173.73 L613,173.73 L613,176.72 L613.75,176.72 L613.75,183.46 L613,183.46 L613,183.07 L612,183.07 L612,182.16 L611,182.16 L611,182.72 L610,182.72 L610,182.2 L609,182.2 L609,182.67 L608,182.67 L608,183.08 L607,183.08 L607,183.2 L606,183.2 L606,183.86 L605,183.86 L605,184.14 L604,184.14 L604,184.75 L603,184.75 L603,183.94 L602,183.94 L602,183.06 L601,183.06 L601,183.18 L600,183.18 L600,183.35 L599,183.35 L599,183.87 L598,183.87 L598,183.86 L597,183.86 L597,184.78 L596,184.78 L596,183.55 L595,183.55 L595,183.61 L594,183.61 L594,182.96 L593,182.96 L593,183.05 L592,183.05 L592,183 L591,183 L591,182.94 L590,182.94 L590,183.72 L589,183.72 L589,184.56 L588,184.56 L588,187.21 L587,187.21 L587,187.2 L586,187.2 L586,185.34 L585,185.34 L585,187.06 L584,187.06 L584,182.79 L583,182.79 L583,182.84 L582,182.84 L582,182.84 L581,182.84 L581,181.54 L580,181.54 L580,182.89 L579,182.89 L579,183.92 L578,183.92 L578,184.01 L577,184.01 L577,184.27 L576,184.27 L576,184.93 L575,184.93 L575,185.6 L574,185.6 L574,184.06 L573,184.06 L573,183.02 L572,183.02 L572,182.29 L571,182.29 L571,181.42 L570,181.42 L570,180.17 L569,180.17 L569,180.36 L568,180.36 L568,180.47 L567,180.47 L567,180.9 L566,180.9 L566,180.15 L565.75,180.15Z M614.55,626.69 L615,626.69 L615,626.25 L616,626.25 L616,624.81 L617,624.81 L617,623.69 L618,623.69 L618,622.31 L619,622.31 L619,621.48 L620,621.48 L620,619.98 L621,619.98 L621,617.46 L622,617.46 L622,619.64 L623,619.64 L623,620.53 L624,620.53 L624,621.13 L625,621.13 L625,621.17 L626,621.17 L626,621.49 L627,621.49 L627,621.92 L628,621.92 L628,620.88 L629,620.88 L629,621.2 L630,621.2 L630,620.43 L631,620.43 L631,617.8 L632,617.8 L632,617.95 L633,617.95 L633,619.09 L634,619.09 L634,618.75 L635,618.75 L635,617.78 L636,617.78 L636,618.79 L637,618.79 L637,620.08 L638,620.08 L638,620.06 L639,620.06 L639,620.08 L639.45,620.08 L639.45,628.19 L639,628.19 L639,627.77 L638,627.77 L638,627.58 L637,627.58 L637,626.93 L636,626.93 L636,627.63 L635,627.63 L635,627.79 L634,627.79 L634,626.88 L633,626.88 L633,628.98 L632,628.98 L632,626.64 L631,626.64 L631,627.39 L630,627.39 L630,629.21 L629,629.21 L629,631.03 L628,631.03 L628,628.96 L627,628.96 L627,629.15 L626,629.15 L626,628.85 L625,628.85 L625,628.02 L624,628.02 L624,628.06 L623,628.06 L623,628.16 L622,628.16 L622,628.15 L621,628.15 L621,628.41 L620,628.41 L620,628.92 L619,628.92 L619,630.48 L618,630.48 L618,633.13 L617,633.13 L617,631.79 L616,631.79 L616,633.04 L615,633.04 L615,632.56 L614.55,632.56Z M644.05,172.51 L645,172.51 L645,171.51 L646,171.51 L646,174.49 L647,174.49 L647,175.59 L648,175.59 L648,174.66 L649,174.66 L649,175.23 L650,175.23 L650,175.53 L651,175.53 L651,175.61 L652,175.61 L652,175.97 L653,175.97 L653,176.56 L654,176.56 L654,174.47 L655,174.47 L655,175.13 L656,175.13 L656,175.6 L657,175.6 L657,176.34 L658,176.34 L658,176.05 L659,176.05 L659,174.07 L660,174.07 L660,175.23 L661,175.23 L661,173.62 L662,173.62 L662,174.99 L663,174.99 L663,175.6 L664,175.6 L664,175.68 L665,175.68 L665,177.54 L666,177.54 L666,178.11 L667,178.11 L667,177.98 L668,177.98 L668,178.68 L669,178.68 L669,177.77 L670,177.77 L670,175.89 L671,175.89 L671,176.02 L672,176.02 L672,173.82 L673,173.82 L673,174.36 L674,174.36 L674,175.34 L675,175.34 L675,175.23 L676,175.23 L676,176.8 L677,176.8 L677,176.7 L678,176.7 L678,177.96 L679,177.96 L679,176.93 L680,176.93 L680,177.16 L681,177.16 L681,177.02 L682,177.02 L682,175.29 L683,175.29 L683,175.89 L684,175.89 L684,176.27 L685,176.27 L685,176.28 L686,176.28 L686,175.53 L687,175.53 L687,175.44 L688,175.44 L688,175.92 L689,175.92 L689,176.35 L690,176.35 L690,177.02 L691,177.02 L691,176.53 L692,176.53 L692,175.22 L692.5,175.22 L692.5,183.13 L692,183.13 L692,183.33 L691,183.33 L691,184.36 L690,184.36 L690,183.9 L689,183.9 L689,183.2 L688,183.2 L688,183.08 L687,183.08 L687,182.36 L686,182.36 L686,182.06 L685,182.06 L685,182.47 L684,182.47 L684,183.9 L683,183.9 L683,185.76 L682,185.76 L682,184.74 L681,184.74 L681,185.03 L680,185.03 L680,185.82 L679,185.82 L679,188.49 L678,188.49 L678,184.43 L677,184.43 L677,183.27 L676,183.27 L676,182.43 L675,182.43 L675,181.46 L674,181.46 L674,181.24 L673,181.24 L673,182.03 L672,182.03 L672,183.08 L671,183.08 L671,183.6 L670,183.6 L670,184.93 L669,184.93 L669,186.42 L668,186.42 L668,187.3 L667,187.3 L667,186.78 L666,186.78 L666,185.06 L665,185.06 L665,184.05 L664,184.05 L664,182.79 L663,182.79 L663,183.37 L662,183.37 L662,183.55 L661,183.55 L661,182.48 L660,182.48 L660,182.65 L659,182.65 L659,184.66 L658,184.66 L658,183.85 L657,183.85 L657,184.53 L656,184.53 L656,184.45 L655,184.45 L655,183.77 L654,183.77 L654,183.05 L653,183.05 L653,183.51 L652,183.51 L652,184.39 L651,184.39 L651,181.88 L650,181.88 L650,182.26 L649,182.26 L649,181.68 L648,181.68 L648,182.03 L647,182.03 L647,182.09 L646,182.09 L646,183.11 L645,183.11 L645,181.11 L644.05,181.11Z M693.3,625.9 L694,625.9 L694,624.57 L695,624.57 L695,624.31 L696,624.31 L696,624.04 L697,624.04 L697,623.69 L698,623.69 L698,622.23 L699,622.23 L699,621.83 L700,621.83 L700,618.38 L701,618.38 L701,619.77 L702,619.77 L702,618.55 L703,618.55 L703,619.87 L704,619.87 L704,620.2 L705,620.2 L705,620.54 L706,620.54 L706,621.15 L707,621.15 L707,621.82 L708,621.82 L708,621.5 L709,621.5 L709,620.3 L710,620.3 L710,619.99 L711,619.99 L711,618.57 L712,618.57 L712,619.26 L713,619.26 L713,619.02 L714,619.02 L714,618.4 L715,618.4 L715,619.13 L716,619.13 L716,619.55 L717,619.55 L717,620.95 L718,620.95 L718,627.43 L717,627.43 L717,626.89 L716,626.89 L716,626.39 L715,626.39 L715,626.84 L714,626.84 L714,628.07 L713,628.07 L713,629.01 L712,629.01 L712,629.65 L711,629.65 L711,628.51 L710,628.51 L710,628.87 L709,628.87 L709,629.33 L708,629.33 L708,629.03 L707,629.03 L707,628.92 L706,628.92 L706,630.04 L705,630.04 L705,628.07 L704,628.07 L704,627.19 L703,627.19 L703,627.37 L702,627.37 L702,627.23 L701,627.23 L701,628.42 L700,628.42 L700,629.06 L699,629.06 L699,629.22 L698,629.22 L698,630.1 L697,630.1 L697,631 L696,631 L696,631.73 L695,631.73 L695,633.7 L694,633.7 L694,632.53 L693.3,632.53Z M722.6,174.02 L723,174.02 L723,171.43 L724,171.43 L724,172.86 L725,172.86 L725,173.74 L726,173.74 L726,173.44 L727,173.44 L727,174.46 L728,174.46 L728,174.96 L729,174.96 L729,175.63 L730,175.63 L730,177.08 L731,177.08 L731,177.01 L732,177.01 L732,173.98 L733,173.98 L733,176.6 L734,176.6 L734,177.17 L735,177.17 L735,177.18 L736,177.18 L736,176.79 L737,176.79 L737,175.98 L738,175.98 L738,174.91 L739,174.91 L739,176.58 L740,176.58 L740,175.95 L741,175.95 L741,176.06 L742,176.06 L742,176.58 L743,176.58 L743,176.15 L744,176.15 L744,176.25 L745,176.25 L745,177.54 L746,177.54 L746,177.42 L747,177.42 L747,177.82 L748,177.82 L748,178.36 L749,178.36 L749,178.25 L750,178.25 L750,176.81 L751,176.81 L751,174.39 L752,174.39 L752,175.01 L753,175.01 L753,175.28 L754,175.28 L754,175 L755,175 L755,175.48 L756,175.48 L756,176.21 L757,176.21 L757,175.34 L757.25,175.34 L757.25,183.72 L757,183.72 L757,183.06 L756,183.06 L756,183.74 L755,183.74 L755,181.07 L754,181.07 L754,181.28 L753,181.28 L753,182.18 L752,182.18 L752,184.02 L751,184.02 L751,184.27 L750,184.27 L750,186.95 L749,186.95 L749,186.13 L748,186.13 L748,184.67 L747,184.67 L747,185.02 L746,185.02 L746,183.96 L745,183.96 L745,183.84 L744,183.84 L744,185.71 L743,185.71 L743,184.19 L742,184.19 L742,183.16 L741,183.16 L741,182.97 L740,182.97 L740,183.75 L739,183.75 L739,184.09 L738,184.09 L738,182.94 L737,182.94 L737,183.57 L736,183.57 L736,183.13 L735,183.13 L735,183.74 L734,183.74 L734,184.76 L733,184.76 L733,185.43 L732,185.43 L732,183.54 L731,183.54 L731,183.8 L730,183.8 L730,182.85 L729,182.85 L729,181.95 L728,181.95 L728,181.44 L727,181.44 L727,181.8 L726,181.8 L726,180.39 L725,180.39 L725,180.41 L724,180.41 L724,181.09 L723,181.09 L723,181.38 L722.6,181.38Z M758.05,626.12 L759,626.12 L759,625.76 L760,625.76 L760,625.08 L761,625.08 L761,623.89 L762,623.89 L762,622.87 L763,622.87 L763,622.47 L764,622.47 L764,620.31 L765,620.31 L765,620.12 L766,620.12 L766,620.16 L767,620.16 L767,619.8 L768,619.8 L768,621.13 L769,621.13 L769,621.65 L770,621.65 L770,621.17 L771,621.17 L771,620.96 L772,620.96 L772,620.33 L773,620.33 L773,621.05 L774,621.05 L774,620.83 L775,620.83 L775,619.55 L776,619.55 L776,618.85 L777,618.85 L777,619.41 L778,619.41 L778,618.85 L779,618.85 L779,619.54 L780,619.54 L780,619.43 L781,619.43 L781,619.53 L782,619.53 L782,619.95 L782.75,619.95 L782.75,627.61 L782,627.61 L782,626.58 L781,626.58 L781,626.4 L780,626.4 L780,626.41 L779,626.41 L779,626.07 L778,626.07 L778,626.37 L777,626.37 L777,627.46 L776,627.46 L776,628.18 L775,628.18 L775,627.68 L774,627.68 L774,627.98 L773,627.98 L773,629.59 L772,629.59 L772,628.86 L771,628.86 L771,628.91 L770,628.91 L770,628.95 L769,628.95 L769,630.39 L768,630.39 L768,627.64 L767,627.64 L767,628.04 L766,628.04 L766,627.71 L765,627.71 L765,628.18 L764,628.18 L764,629.23 L763,629.23 L763,631.26 L762,631.26 L762,633.9 L761,633.9 L761,631.9 L760,631.9 L760,632.73 L759,632.73 L759,632.69 L758.05,632.69Z M787.35,173.27 L788,173.27 L788,174.23 L789,174.23 L789,174.73 L790,174.73 L790,174.6 L791,174.6 L791,175.43 L792,175.43 L792,174.73 L793,174.73 L793,175.01 L794,175.01 L794,175.45 L795,175.45 L795,175.85 L796,175.85 L796,176.42 L797,176.42 L797,176.36 L798,176.36 L798,177.09 L799,177.09 L799,177.75 L800,177.75 L800,178.39 L801,178.39 L801,175.09 L802,175.09 L802,175.12 L803,175.12 L803,175.44 L804,175.44 L804,174.84 L805,174.84 L805,173.41 L806,173.41 L806,174.26 L807,174.26 L807,174.55 L808,174.55 L808,175.37 L809,175.37 L809,177.05 L810,177.05 L810,175.5 L811,175.5 L811,175.67 L812,175.67 L812,177.5 L813,177.5 L813,175.45 L814,175.45 L814,176.31 L815,176.31 L815,176.53 L816,176.53 L816,173.95 L817,173.95 L817,175.11 L818,175.11 L818,175.52 L819,175.52 L819,176.27 L820,176.27 L820,176.79 L821,176.79 L821,177.6 L822,177.6 L822,185.19 L821,185.19 L821,183.39 L820,183.39 L820,182.07 L819,182.07 L819,182.06 L818,182.06 L818,182.12 L817,182.12 L817,182.75 L816,182.75 L816,183.58 L815,183.58 L815,185.86 L814,185.86 L814,184.93 L813,184.93 L813,185.95 L812,185.95 L812,186.93 L811,186.93 L811,184.15 L810,184.15 L810,183.19 L809,183.19 L809,182 L808,182 L808,181.61 L807,181.61 L807,182.88 L806,182.88 L806,180.92 L805,180.92 L805,182.16 L804,182.16 L804,183.61 L803,183.61 L803,184.26 L802,184.26 L802,187.19 L801,187.19 L801,184.53 L800,184.53 L800,184.67 L799,184.67 L799,185.06 L798,185.06 L798,184.38 L797,184.38 L797,183.15 L796,183.15 L796,182.41 L795,182.41 L795,184.24 L794,184.24 L794,183.61 L793,183.61 L793,183.74 L792,183.74 L792,182.28 L791,182.28 L791,182.4 L790,182.4 L790,182.59 L789,182.59 L789,183.67 L788,183.67 L788,180.71 L787.35,180.71Z M822.8,625.71 L823,625.71 L823,625.89 L824,625.89 L824,624.7 L825,624.7 L825,623.23 L826,623.23 L826,622.49 L827,622.49 L827,620.76 L828,620.76 L828,621.24 L829,621.24 L829,620.11 L830,620.11 L830,620.09 L831,620.09 L831,620.05 L832,620.05 L832,620.76 L833,620.76 L833,617.85 L834,617.85 L834,618.79 L835,618.79 L835,619.15 L836,619.15 L836,620.27 L837,620.27 L837,619.54 L838,619.54 L838,620.32 L839,620.32 L839,619.86 L840,619.86 L840,621.04 L841,621.04 L841,621.53 L842,621.53 L842,621.27 L843,621.27 L843,620.2 L844,620.2 L844,619.22 L845,619.22 L845,618.34 L846,618.34 L846,618.82 L847,618.82 L847,618.82 L847.8,618.82 L847.8,626.34 L847,626.34 L847,626.37 L846,626.37 L846,628.62 L845,628.62 L845,627.42 L844,627.42 L844,628.84 L843,628.84 L843,628.46 L842,628.46 L842,628.87 L841,628.87 L841,628.77 L840,628.77 L840,629.5 L839,629.5 L839,629.37 L838,629.37 L838,627.98 L837,627.98 L837,628.55 L836,628.55 L836,628.23 L835,628.23 L835,628.72 L834,628.72 L834,628.26 L833,628.26 L833,628.3 L832,628.3 L832,627.96 L831,627.96 L831,629.53 L830,629.53 L830,628.49 L829,628.49 L829,628.64 L828,628.64 L828,629.24 L827,629.24 L827,630.75 L826,630.75 L826,630.73 L825,630.73 L825,631.83 L824,631.83 L824,633.61 L823,633.61 L823,634.13 L822.8,634.13Z M852.4,175.74 L853,175.74 L853,176.03 L854,176.03 L854,173.52 L855,173.52 L855,174.88 L856,174.88 L856,174.81 L857,174.81 L857,174.12 L858,174.12 L858,174.26 L859,174.26 L859,174.81 L860,174.81 L860,175.96 L861,175.96 L861,176.68 L861.3,176.68 L861.3,184.1 L861,184.1 L861,184.19 L860,184.19 L860,181.38 L859,181.38 L859,182.43 L858,182.43 L858,181.41 L857,181.41 L857,182.73 L856,182.73 L856,182.97 L855,182.97 L855,185.65 L854,185.65 L854,182.7 L853,182.7 L853,183.03 L852.4,183.03Z M862.1,623.33 L863,623.33 L863,624.4 L864,624.4 L864,624.35 L865,624.35 L865,623.71 L866,623.71 L866,623.21 L867,623.21 L867,621.9 L868,621.9 L868,620.75 L869,620.75 L869,621.14 L870,621.14 L870,620.94 L871,620.94 L871,620.47 L872,620.47 L872,620.74 L873,620.74 L873,620.91 L874,620.91 L874,630.63 L873,630.63 L873,628.45 L872,628.45 L872,627.72 L871,627.72 L871,628.23 L870,628.23 L870,628.99 L869,628.99 L869,632.33 L868,632.33 L868,631.56 L867,631.56 L867,631.44 L866,631.44 L866,633.28 L865,633.28 L865,632.07 L864,632.07 L864,632.18 L863,632.18 L863,632.74 L862.1,632.74Z M878.6,174.14 L879,174.14 L879,174.58 L880,174.58 L880,175.04 L881,175.04 L881,175.61 L882,175.61 L882,176.16 L883,176.16 L883,175.87 L884,175.87 L884,175.72 L885,175.72 L885,175.09 L886,175.09 L886,174.71 L887,174.71 L887,175.56 L888,175.56 L888,176.01 L889,176.01 L889,175.54 L890,175.54 L890,176.82 L891,176.82 L891,178.22 L892,178.22 L892,178.38 L893,178.38 L893,178.03 L894,178.03 L894,177.09 L895,177.09 L895,177.1 L896,177.1 L896,175.77 L897,175.77 L897,173.78 L898,173.78 L898,174.4 L899,174.4 L899,174.95 L900,174.95 L900,176 L900.6,176 L900.6,182.28 L900,182.28 L900,181.73 L899,181.73 L899,182.1 L898,182.1 L898,182.01 L897,182.01 L897,182.56 L896,182.56 L896,183.9 L895,183.9 L895,184.58 L894,184.58 L894,185.37 L893,185.37 L893,185.16 L892,185.16 L892,185.6 L891,185.6 L891,185.35 L890,185.35 L890,183.05 L889,183.05 L889,183.02 L888,183.02 L888,182.39 L887,182.39 L887,182.55 L886,182.55 L886,185.25 L885,185.25 L885,183.56 L884,183.56 L884,182.88 L883,182.88 L883,183.8 L882,183.8 L882,181.93 L881,181.93 L881,181.99 L880,181.99 L880,182.87 L879,182.87 L879,182.96 L878.6,182.96Z M901.4,624.21 L902,624.21 L902,624.83 L903,624.83 L903,625.04 L904,625.04 L904,624.76 L905,624.76 L905,623.39 L906,623.39 L906,619.96 L907,619.96 L907,619.01 L908,619.01 L908,616.69 L909,616.69 L909,618.87 L910,618.87 L910,619.63 L911,619.63 L911,617.61 L912,617.61 L912,619.76 L913,619.76 L913,620.32 L913.3,620.32 L913.3,627.85 L913,627.85 L913,627.76 L912,627.76 L912,629.51 L911,629.51 L911,627.98 L910,627.98 L910,627.77 L909,627.77 L909,629.53 L908,629.53 L908,630.27 L907,630.27 L907,630.57 L906,630.57 L906,631.44 L905,631.44 L905,632.74 L904,632.74 L904,635.37 L903,635.37 L903,634.79 L902,634.79 L902,631.67 L901.4,631.67Z M917.9,174.86 L918,174.86 L918,174.39 L919,174.39 L919,174.67 L920,174.67 L920,174.81 L921,174.81 L921,175.62 L922,175.62 L922,175.68 L923,175.68 L923,176.22 L924,176.22 L924,176.52 L925,176.52 L925,176.58 L926,176.58 L926,176.43 L926.8,176.43 L926.8,183.95 L926,183.95 L926,185.32 L925,185.32 L925,184.04 L924,184.04 L924,182.8 L923,182.8 L923,181.86 L922,181.86 L922,181.87 L921,181.87 L921,181.52 L920,181.52 L920,181.98 L919,181.98 L919,182.65 L918,182.65 L918,181.82 L917.9,181.82Z M927.6,624.44 L928,624.44 L928,624.09 L929,624.09 L929,622.8 L930,622.8 L930,621.19 L931,621.19 L931,620.65 L932,620.65 L932,622.25 L933,622.25 L933,622.64 L934,622.64 L934,622.81 L935,622.81 L935,622.39 L936,622.39 L936,621.72 L937,621.72 L937,620.88 L938,620.88 L938,619.9 L939,619.9 L939,619.04 L939.5,619.04 L939.5,626.35 L939,626.35 L939,626.72 L938,626.72 L938,627.06 L937,627.06 L937,627.89 L936,627.89 L936,628.93 L935,628.93 L935,630.51 L934,630.51 L934,631.99 L933,631.99 L933,632.35 L932,632.35 L932,630.24 L931,630.24 L931,631.12 L930,631.12 L930,633.25 L929,633.25 L929,630.93 L928,630.93 L928,631.74 L927.6,631.74Z M944.1,173.65 L945,173.65 L945,175.02 L946,175.02 L946,176.02 L947,176.02 L947,175.24 L948,175.24 L948,174.78 L949,174.78 L949,174.82 L950,174.82 L950,174.95 L951,174.95 L951,173.68 L952,173.68 L952,174.36 L953,174.36 L953,181.97 L952,181.97 L952,182 L951,182 L951,181.58 L950,181.58 L950,181.9 L949,181.9 L949,184.98 L948,184.98 L948,182.89 L947,182.89 L947,184.03 L946,184.03 L946,182.72 L945,182.72 L945,182.96 L944.1,182.96Z M953.8,625.71 L954,625.71 L954,624.55 L955,624.55 L955,623.54 L956,623.54 L956,624.34 L957,624.34 L957,620.37 L958,620.37 L958,621.96 L959,621.96 L959,620.28 L960,620.28 L960,621.17 L961,621.17 L961,618.85 L962,618.85 L962,620.14 L963,620.14 L963,620.73 L964,620.73 L964,621.05 L965,621.05 L965,621.44 L966,621.44 L966,620.68 L967,620.68 L967,620.58 L968,620.58 L968,620.33 L969,620.33 L969,620.47 L970,620.47 L970,619.75 L971,619.75 L971,620.28 L972,620.28 L972,620.6 L973,620.6 L973,620.68 L974,620.68 L974,619.77 L975,619.77 L975,619.06 L976,619.06 L976,619.76 L977,619.76 L977,619.23 L978,619.23 L978,618.42 L978.7,618.42 L978.7,628.94 L978,628.94 L978,626.22 L977,626.22 L977,626.42 L976,626.42 L976,627.01 L975,627.01 L975,628.3 L974,628.3 L974,627.28 L973,627.28 L973,627.53 L972,627.53 L972,627.42 L971,627.42 L971,627.74 L970,627.74 L970,629.01 L969,629.01 L969,628.2 L968,628.2 L968,628.05 L967,628.05 L967,627.73 L966,627.73 L966,627.95 L965,627.95 L965,627.65 L964,627.65 L964,627.54 L963,627.54 L963,627.7 L962,627.7 L962,628.88 L961,628.88 L961,630.49 L960,630.49 L960,629.23 L959,629.23 L959,630.8 L958,630.8 L958,632.27 L957,632.27 L957,634.13 L956,634.13 L956,632.84 L955,632.84 L955,632.31 L954,632.31 L954,632.86 L953.8,632.86Z M983.3,174.83 L984,174.83 L984,175.54 L985,175.54 L985,175.01 L986,175.01 L986,174.76 L987,174.76 L987,176.19 L988,176.19 L988,175.8 L989,175.8 L989,175.28 L990,175.28 L990,175.36 L991,175.36 L991,175.37 L992,175.37 L992,175.32 L993,175.32 L993,174.76 L994,174.76 L994,174.92 L995,174.92 L995,176.07 L996,176.07 L996,177.69 L997,177.69 L997,175.08 L998,175.08 L998,176.24 L999,176.24 L999,176.37 L1000,176.37 L1000,175.4 L1001,175.4 L1001,175 L1002,175 L1002,173.06 L1003,173.06 L1003,172.09 L1004,172.09 L1004,173.54 L1005,173.54 L1005,176.13 L1005.2,176.13 L1005.2,183.53 L1005,183.53 L1005,183.07 L1004,183.07 L1004,183.22 L1003,183.22 L1003,184.37 L1002,184.37 L1002,182.11 L1001,182.11 L1001,184.18 L1000,184.18 L1000,185.29 L999,185.29 L999,185.14 L998,185.14 L998,186.11 L997,186.11 L997,187.47 L996,187.47 L996,184.09 L995,184.09 L995,183.25 L994,183.25 L994,183.38 L993,183.38 L993,182.66 L992,182.66 L992,182.91 L991,182.91 L991,181.34 L990,181.34 L990,182.42 L989,182.42 L989,181.97 L988,181.97 L988,182.92 L987,182.92 L987,184.47 L986,184.47 L986,182.69 L985,182.69 L985,181.71 L984,181.71 L984,181.45 L983.3,181.45Z M1006,625.67 L1007,625.67 L1007,624.77 L1008,624.77 L1008,622.7 L1009,622.7 L1009,621.7 L1010,621.7 L1010,620.88 L1011,620.88 L1011,619.97 L1012,619.97 L1012,620.07 L1013,620.07 L1013,619.98 L1014,619.98 L1014,620.61 L1015,620.61 L1015,620.78 L1016,620.78 L1016,621.34 L1017,621.34 L1017,620 L1017.85,620 L1017.85,630.24 L1017,630.24 L1017,629.07 L1016,629.07 L1016,630.71 L1015,630.71 L1015,630.82 L1014,630.82 L1014,629.31 L1013,629.31 L1013,628.94 L1012,628.94 L1012,629.25 L1011,629.25 L1011,630.09 L1010,630.09 L1010,632.34 L1009,632.34 L1009,633.62 L1008,633.62 L1008,634.1 L1007,634.1 L1007,632.17 L1006,632.17Z M1022.45,172.29 L1023,172.29 L1023,173.83 L1024,173.83 L1024,175.32 L1025,175.32 L1025,176.33 L1026,176.33 L1026,176.68 L1027,176.68 L1027,174.84 L1028,174.84 L1028,176.1 L1029,176.1 L1029,176.08 L1030,176.08 L1030,174.96 L1031,174.96 L1031,174.43 L1031.3,174.43 L1031.3,181.14 L1031,181.14 L1031,181.45 L1030,181.45 L1030,182.1 L1029,182.1 L1029,183.48 L1028,183.48 L1028,183.89 L1027,183.89 L1027,183.19 L1026,183.19 L1026,183.47 L1025,183.47 L1025,181.59 L1024,181.59 L1024,180.6 L1023,180.6 L1023,180.46 L1022.45,180.46Z M1032.1,623.53 L1033,623.53 L1033,623.24 L1034,623.24 L1034,623.83 L1035,623.83 L1035,623.19 L1036,623.19 L1036,621.77 L1037,621.77 L1037,623.26 L1038,623.26 L1038,623.36 L1039,623.36 L1039,622.25 L1040,622.25 L1040,620.8 L1041,620.8 L1041,620.82 L1042,620.82 L1042,620.53 L1043,620.53 L1043,619.67 L1043.95,619.67 L1043.95,627.18 L1043,627.18 L1043,627.72 L1042,627.72 L1042,628.69 L1041,628.69 L1041,629.88 L1040,629.88 L1040,629.94 L1039,629.94 L1039,632.19 L1038,632.19 L1038,631.48 L1037,631.48 L1037,633.69 L1036,633.69 L1036,631.02 L1035,631.02 L1035,632.88 L1034,632.88 L1034,631.01 L1033,631.01 L1033,633.14 L1032.1,633.14Z M1048.55,173.65 L1049,173.65 L1049,173.89 L1050,173.89 L1050,175.14 L1051,175.14 L1051,174.99 L1052,174.99 L1052,174.7 L1053,174.7 L1053,174.64 L1054,174.64 L1054,174.58 L1055,174.58 L1055,175.49 L1056,175.49 L1056,176.35 L1057,176.35 L1057,175.36 L1058,175.36 L1058,176.82 L1059,176.82 L1059,176.96 L1060,176.96 L1060,176.87 L1061,176.87 L1061,176.21 L1062,176.21 L1062,176.09 L1063,176.09 L1063,174.21 L1064,174.21 L1064,176.28 L1065,176.28 L1065,176.71 L1066,176.71 L1066,177.41 L1067,177.41 L1067,176.97 L1068,176.97 L1068,176.72 L1069,176.72 L1069,175.13 L1070,175.13 L1070,176.45 L1071,176.45 L1071,173.41 L1072,173.41 L1072,175.29 L1073,175.29 L1073,175.07 L1074,175.07 L1074,176.26 L1075,176.26 L1075,176.69 L1076,176.69 L1076,175.27 L1077,175.27 L1077,177.31 L1078,177.31 L1078,177.13 L1079,177.13 L1079,177.18 L1080,177.18 L1080,176.8 L1081,176.8 L1081,175.75 L1082,175.75 L1082,175.1 L1083,175.1 L1083,175.55 L1084,175.55 L1084,174.77 L1085,174.77 L1085,174.77 L1086,174.77 L1086,176.26 L1087,176.26 L1087,177.55 L1088,177.55 L1088,178.27 L1089,178.27 L1089,178.09 L1090,178.09 L1090,177.64 L1091,177.64 L1091,176.2 L1092,176.2 L1092,176.83 L1093,176.83 L1093,175.47 L1094,175.47 L1094,174.46 L1095,174.46 L1095,175.26 L1096,175.26 L1096,174.36 L1097,174.36 L1097,173.81 L1098,173.81 L1098,176.38 L1099,176.38 L1099,176.98 L1100,176.98 L1100,177.26 L1101,177.26 L1101,177.29 L1102,177.29 L1102,177.03 L1103,177.03 L1103,176.49 L1104,176.49 L1104,175.96 L1105,175.96 L1105,176.39 L1106,176.39 L1106,176.59 L1107,176.59 L1107,176.94 L1108,176.94 L1108,177.09 L1109,177.09 L1109,177.02 L1110,177.02 L1110,176.23 L1111,176.23 L1111,175.7 L1112,175.7 L1112,175.95 L1113,175.95 L1113,176.46 L1114,176.46 L1114,176.44 L1115,176.44 L1115,175.98 L1116,175.98 L1116,177.03 L1117,177.03 L1117,177.57 L1118,177.57 L1118,177.71 L1119,177.71 L1119,177.46 L1120,177.46 L1120,174.34 L1121,174.34 L1121,173.59 L1122,173.59 L1122,175.29 L1123,175.29 L1123,175.79 L1124,175.79 L1124,173.25 L1125,173.25 L1125,175.28 L1126,175.28 L1126,175.72 L1127,175.72 L1127,176.63 L1128,176.63 L1128,176.66 L1129,176.66 L1129,177.54 L1130,177.54 L1130,177.18 L1131,177.18 L1131,177.39 L1132,177.39 L1132,173.52 L1133,173.52 L1133,174.6 L1134,174.6 L1134,175.21 L1135,175.21 L1135,175.92 L1136,175.92 L1136,175.6 L1137,175.6 L1137,176.27 L1138,176.27 L1138,177.33 L1139,177.33 L1139,177.83 L1140,177.83 L1140,177.03 L1141,177.03 L1141,176.71 L1142,176.71 L1142,175.31 L1143,175.31 L1143,175.18 L1144,175.18 L1144,175.97 L1145,175.97 L1145,175.53 L1146,175.53 L1146,175.56 L1147,175.56 L1147,175.94 L1148,175.94 L1148,175 L1149,175 L1149,176.65 L1150,176.65 L1150,177.25 L1151,177.25 L1151,177.41 L1152,177.41 L1152,177.21 L1153,177.21 L1153,176.59 L1154,176.59 L1154,176.06 L1155,176.06 L1155,176.11 L1156,176.11 L1156,175.29 L1157,175.29 L1157,176.23 L1158,176.23 L1158,176.46 L1159,176.46 L1159,176.28 L1160,176.28 L1160,176.92 L1161,176.92 L1161,177.03 L1162,177.03 L1162,177.37 L1163,177.37 L1163,176.5 L1164,176.5 L1164,175.99 L1165,175.99 L1165,174.63 L1166,174.63 L1166,175.7 L1167,175.7 L1167,175.67 L1168,175.67 L1168,175.76 L1169,175.76 L1169,176.5 L1170,176.5 L1170,177.28 L1171,177.28 L1171,177.36 L1172,177.36 L1172,177.69 L1173,177.69 L1173,176.42 L1174,176.42 L1174,173.89 L1175,173.89 L1175,173.23 L1176,173.23 L1176,175.32 L1177,175.32 L1177,171.95 L1178,171.95 L1178,175.12 L1179,175.12 L1179,175.6 L1180,175.6 L1180,176.16 L1181,176.16 L1181,176.27 L1182,176.27 L1182,176.57 L1183,176.57 L1183,176.64 L1184,176.64 L1184,174.56 L1185,174.56 L1185,175.73 L1186,175.73 L1186,176.33 L1187,176.33 L1187,175.95 L1188,175.95 L1188,176.46 L1189,176.46 L1189,175.43 L1190,175.43 L1190,177.27 L1191,177.27 L1191,177.85 L1192,177.85 L1192,177.5 L1193,177.5 L1193,175.74 L1194,175.74 L1194,176.41 L1195,176.41 L1195,176.27 L1196,176.27 L1196,176.2 L1197,176.2 L1197,176.17 L1198,176.17 L1198,173.84 L1199,173.84 L1199,175.64 L1200,175.64 L1200,176.54 L1201,176.54 L1201,174.62 L1202,174.62 L1202,176.89 L1203,176.89 L1203,176.67 L1204,176.67 L1204,176.63 L1205,176.63 L1205,174.13 L1206,174.13 L1206,175.31 L1207,175.31 L1207,174.7 L1208,174.7 L1208,172.86 L1209,172.86 L1209,176.2 L1210,176.2 L1210,175.92 L1211,175.92 L1211,177.64 L1212,177.64 L1212,178.07 L1213,178.07 L1213,178.02 L1214,178.02 L1214,174.4 L1215,174.4 L1215,176.08 L1216,176.08 L1216,175.48 L1217,175.48 L1217,175.41 L1218,175.41 L1218,174.76 L1219,174.76 L1219,176.25 L1220,176.25 L1220,173.27 L1221,173.27 L1221,174.46 L1222,174.46 L1222,176.96 L1223,176.96 L1223,177.35 L1224,177.35 L1224,173.58 L1225,173.58 L1225,175.43 L1226,175.43 L1226,175.98 L1227,175.98 L1227,175.35 L1228,175.35 L1228,175.68 L1229,175.68 L1229,175.96 L1230,175.96 L1230,176.21 L1231,176.21 L1231,174.62 L1232,174.62 L1232,176.27 L1233,176.27 L1233,175.82 L1234,175.82 L1234,175.13 L1235,175.13 L1235,174.29 L1236,174.29 L1236,174.75 L1237,174.75 L1237,175.59 L1238,175.59 L1238,176.55 L1239,176.55 L1239,176.23 L1240,176.23 L1240,176.43 L1241,176.43 L1241,174.71 L1242,174.71 L1242,176.23 L1243,176.23 L1243,176.96 L1244,176.96 L1244,176.54 L1245,176.54 L1245,176.58 L1246,176.58 L1246,176.44 L1247,176.44 L1247,175.49 L1248,175.49 L1248,175.93 L1249,175.93 L1249,175.54 L1250,175.54 L1250,175.22 L1251,175.22 L1251,176.5 L1252,176.5 L1252,177.76 L1253,177.76 L1253,177.19 L1254,177.19 L1254,176.76 L1255,176.76 L1255,176.47 L1256,176.47 L1256,174.51 L1257,174.51 L1257,175.72 L1258,175.72 L1258,173.62 L1259,173.62 L1259,175.4 L1260,175.4 L1260,175.67 L1261,175.67 L1261,174.9 L1262,174.9 L1262,176.83 L1263,176.83 L1263,177.89 L1264,177.89 L1264,177.97 L1265,177.97 L1265,177.8 L1266,177.8 L1266,177.55 L1267,177.55 L1267,177.06 L1268,177.06 L1268,176.61 L1269,176.61 L1269,183.14 L1268,183.14 L1268,184.2 L1267,184.2 L1267,186.48 L1266,186.48 L1266,187.41 L1265,187.41 L1265,186.24 L1264,186.24 L1264,184.58 L1263,184.58 L1263,184.24 L1262,184.24 L1262,185.67 L1261,185.67 L1261,183.94 L1260,183.94 L1260,182.56 L1259,182.56 L1259,182.59 L1258,182.59 L1258,183.96 L1257,183.96 L1257,184.39 L1256,184.39 L1256,186.6 L1255,186.6 L1255,186.92 L1254,186.92 L1254,185.18 L1253,185.18 L1253,184.07 L1252,184.07 L1252,183.88 L1251,183.88 L1251,184.7 L1250,184.7 L1250,182.19 L1249,182.19 L1249,182.18 L1248,182.18 L1248,182.18 L1247,182.18 L1247,182.57 L1246,182.57 L1246,182.89 L1245,182.89 L1245,184.46 L1244,184.46 L1244,186.8 L1243,186.8 L1243,186.27 L1242,186.27 L1242,184.83 L1241,184.83 L1241,185.32 L1240,185.32 L1240,184.99 L1239,184.99 L1239,182.74 L1238,182.74 L1238,182.88 L1237,182.88 L1237,184.44 L1236,184.44 L1236,186.16 L1235,186.16 L1235,184.04 L1234,184.04 L1234,183.78 L1233,183.78 L1233,185.18 L1232,185.18 L1232,184.46 L1231,184.46 L1231,184.89 L1230,184.89 L1230,183.24 L1229,183.24 L1229,182.87 L1228,182.87 L1228,182.66 L1227,182.66 L1227,183.27 L1226,183.27 L1226,184.61 L1225,184.61 L1225,183.72 L1224,183.72 L1224,183.76 L1223,183.76 L1223,184.1 L1222,184.1 L1222,183.4 L1221,183.4 L1221,183.15 L1220,183.15 L1220,182.91 L1219,182.91 L1219,182.92 L1218,182.92 L1218,182.56 L1217,182.56 L1217,182.73 L1216,182.73 L1216,183.19 L1215,183.19 L1215,183.63 L1214,183.63 L1214,185.5 L1213,185.5 L1213,185.38 L1212,185.38 L1212,185.01 L1211,185.01 L1211,187.42 L1210,187.42 L1210,183.68 L1209,183.68 L1209,184.2 L1208,184.2 L1208,185.65 L1207,185.65 L1207,183.36 L1206,183.36 L1206,183.24 L1205,183.24 L1205,183.26 L1204,183.26 L1204,183.75 L1203,183.75 L1203,184.19 L1202,184.19 L1202,184.55 L1201,184.55 L1201,186.19 L1200,186.19 L1200,184.15 L1199,184.15 L1199,184.02 L1198,184.02 L1198,182.47 L1197,182.47 L1197,182.94 L1196,182.94 L1196,183.68 L1195,183.68 L1195,183.43 L1194,183.43 L1194,183.72 L1193,183.72 L1193,184.18 L1192,184.18 L1192,183.43 L1191,183.43 L1191,183.43 L1190,183.43 L1190,183.51 L1189,183.51 L1189,183.21 L1188,183.21 L1188,182.75 L1187,182.75 L1187,183.05 L1186,183.05 L1186,185.12 L1185,185.12 L1185,184.33 L1184,184.33 L1184,183.93 L1183,183.93 L1183,185.4 L1182,185.4 L1182,184.39 L1181,184.39 L1181,185.71 L1180,185.71 L1180,183.98 L1179,183.98 L1179,183.71 L1178,183.71 L1178,182.94 L1177,182.94 L1177,183.68 L1176,183.68 L1176,184.47 L1175,184.47 L1175,185.11 L1174,185.11 L1174,184.36 L1173,184.36 L1173,184.03 L1172,184.03 L1172,183.95 L1171,183.95 L1171,184.49 L1170,184.49 L1170,184 L1169,184 L1169,185.25 L1168,185.25 L1168,182.85 L1167,182.85 L1167,183.35 L1166,183.35 L1166,183.79 L1165,183.79 L1165,182.64 L1164,182.64 L1164,183.7 L1163,183.7 L1163,184.15 L1162,184.15 L1162,187.12 L1161,187.12 L1161,184.53 L1160,184.53 L1160,186.43 L1159,186.43 L1159,183.06 L1158,183.06 L1158,182.65 L1157,182.65 L1157,182.87 L1156,182.87 L1156,183.06 L1155,183.06 L1155,183.48 L1154,183.48 L1154,183.2 L1153,183.2 L1153,183.11 L1152,183.11 L1152,183.6 L1151,183.6 L1151,184.63 L1150,184.63 L1150,184.23 L1149,184.23 L1149,183.86 L1148,183.86 L1148,183.59 L1147,183.59 L1147,183.3 L1146,183.3 L1146,182.63 L1145,182.63 L1145,182.81 L1144,182.81 L1144,184 L1143,184 L1143,183.65 L1142,183.65 L1142,184.17 L1141,184.17 L1141,184.27 L1140,184.27 L1140,183.88 L1139,183.88 L1139,183.43 L1138,183.43 L1138,182.63 L1137,182.63 L1137,182.39 L1136,182.39 L1136,183.57 L1135,183.57 L1135,183.81 L1134,183.81 L1134,185.13 L1133,185.13 L1133,185.07 L1132,185.07 L1132,183.71 L1131,183.71 L1131,183.72 L1130,183.72 L1130,183.92 L1129,183.92 L1129,184.16 L1128,184.16 L1128,183.66 L1127,183.66 L1127,182.32 L1126,182.32 L1126,182 L1125,182 L1125,182.24 L1124,182.24 L1124,182.52 L1123,182.52 L1123,183.09 L1122,183.09 L1122,184.55 L1121,184.55 L1121,185.32 L1120,185.32 L1120,185.68 L1119,185.68 L1119,186.44 L1118,186.44 L1118,184.92 L1117,184.92 L1117,184.56 L1116,184.56 L1116,182.96 L1115,182.96 L1115,182.54 L1114,182.54 L1114,182.91 L1113,182.91 L1113,182.65 L1112,182.65 L1112,183.05 L1111,183.05 L1111,183.98 L1110,183.98 L1110,184.25 L1109,184.25 L1109,183.32 L1108,183.32 L1108,184.01 L1107,184.01 L1107,185.36 L1106,185.36 L1106,183.1 L1105,183.1 L1105,182.7 L1104,182.7 L1104,182.79 L1103,182.79 L1103,183.11 L1102,183.11 L1102,183.6 L1101,183.6 L1101,184 L1100,184 L1100,185.27 L1099,185.27 L1099,186.13 L1098,186.13 L1098,183.68 L1097,183.68 L1097,184.46 L1096,184.46 L1096,182.5 L1095,182.5 L1095,182.49 L1094,182.49 L1094,182.62 L1093,182.62 L1093,183.96 L1092,183.96 L1092,183.96 L1091,183.96 L1091,184.93 L1090,184.93 L1090,187.49 L1089,187.49 L1089,187.55 L1088,187.55 L1088,186.35 L1087,186.35 L1087,183.98 L1086,183.98 L1086,182.85 L1085,182.85 L1085,182.91 L1084,182.91 L1084,182.73 L1083,182.73 L1083,184.43 L1082,184.43 L1082,183.04 L1081,183.04 L1081,183.88 L1080,183.88 L1080,186.78 L1079,186.78 L1079,184.22 L1078,184.22 L1078,184.06 L1077,184.06 L1077,183.44 L1076,183.44 L1076,183.55 L1075,183.55 L1075,182.85 L1074,182.85 L1074,182.35 L1073,182.35 L1073,183.09 L1072,183.09 L1072,183.73 L1071,183.73 L1071,185.11 L1070,185.11 L1070,184.33 L1069,184.33 L1069,183.78 L1068,183.78 L1068,184.89 L1067,184.89 L1067,184.36 L1066,184.36 L1066,185.23 L1065,185.23 L1065,184.26 L1064,184.26 L1064,183.33 L1063,183.33 L1063,185.19 L1062,185.19 L1062,183.05 L1061,183.05 L1061,182.96 L1060,182.96 L1060,183.45 L1059,183.45 L1059,183.74 L1058,183.74 L1058,183.65 L1057,183.65 L1057,182.8 L1056,182.8 L1056,181.87 L1055,181.87 L1055,181.45 L1054,181.45 L1054,182.32 L1053,182.32 L1053,184.05 L1052,184.05 L1052,182.11 L1051,182.11 L1051,181.53 L1050,181.53 L1050,181.74 L1049,181.74 L1049,181.34 L1048.55,181.34Z"/><path id="te" d="M210,179.38 L210,499.4 L210.8,505.4 L210.8,631 M379.1,628 L380.3,409.4 L380.9,211.4 L381.9,193.4 L382.9,184.4 L384.1,176.28 M405,179.25 L405,499.4 L405.8,505.4 L405.8,631 M417.65,628 L418.85,409.4 L419.45,211.4 L420.45,193.4 L421.45,184.4 L422.65,177.33 M431.1,180.34 L431.1,499.4 L431.9,505.4 L431.9,631 M443.75,628 L444.95,409.4 L445.55,211.4 L446.55,193.4 L447.55,184.4 L448.75,176.49 M457.2,179.14 L457.2,499.4 L458,505.4 L458,631 M469.85,628 L471.05,409.4 L471.65,211.4 L472.65,193.4 L473.65,184.4 L474.85,176.95 M483.3,180.53 L483.3,499.4 L484.1,505.4 L484.1,631 M495.95,628 L497.15,409.4 L497.75,211.4 L498.75,193.4 L499.75,184.4 L500.95,176.89 M509.4,179.72 L509.4,499.4 L510.2,505.4 L510.2,631 M522.05,628 L523.25,409.4 L523.85,211.4 L524.85,193.4 L525.85,184.4 L527.05,176.48 M548.5,180.11 L548.5,499.4 L549.3,505.4 L549.3,631 M561.15,628 L562.35,409.4 L562.95,211.4 L563.95,193.4 L564.95,184.4 L566.15,177.39 M613.75,181.06 L613.75,499.4 L614.55,505.4 L614.55,631 M639.45,628 L640.65,409.4 L641.25,211.4 L642.25,193.4 L643.25,184.4 L644.45,177.2 M692.5,180.26 L692.5,499.4 L693.3,505.4 L693.3,631 M718,628 L719.2,409.4 L719.8,211.4 L720.8,193.4 L721.8,184.4 L723,176.91 M757.25,180.51 L757.25,499.4 L758.05,505.4 L758.05,631 M782.75,628 L783.95,409.4 L784.55,211.4 L785.55,193.4 L786.55,184.4 L787.75,177.6 M822,180.72 L822,499.4 L822.8,505.4 L822.8,631 M847.8,628 L849,409.4 L849.6,211.4 L850.6,193.4 L851.6,184.4 L852.8,179.24 M861.3,180.31 L861.3,499.4 L862.1,505.4 L862.1,631 M874,628 L875.2,409.4 L875.8,211.4 L876.8,193.4 L877.8,184.4 L879,177.37 M900.6,179.64 L900.6,499.4 L901.4,505.4 L901.4,631 M913.3,628 L914.5,409.4 L915.1,211.4 L916.1,193.4 L917.1,184.4 L918.3,177.69 M926.8,179.24 L926.8,499.4 L927.6,505.4 L927.6,631 M939.5,628 L940.7,409.4 L941.3,211.4 L942.3,193.4 L943.3,184.4 L944.5,178.82 M953,179.67 L953,499.4 L953.8,505.4 L953.8,631 M978.7,628 L979.9,409.4 L980.5,211.4 L981.5,193.4 L982.5,184.4 L983.7,177.85 M1005.2,179.93 L1005.2,499.4 L1006,505.4 L1006,631 M1017.85,628 L1019.05,409.4 L1019.65,211.4 L1020.65,193.4 L1021.65,184.4 L1022.85,177.1 M1031.3,178.41 L1031.3,499.4 L1032.1,505.4 L1032.1,631 M1043.95,628 L1045.15,409.4 L1045.75,211.4 L1046.75,193.4 L1047.75,184.4 L1048.95,177.98" fill="none" stroke-width="1.3"/><clipPath id="pale"><rect x="210.5" y="150" width="169" height="500"/><rect x="405.5" y="150" width="13" height="500"/><rect x="524" y="150" width="11.5" height="500"/><rect x="549" y="150" width="12" height="500"/><rect x="666.5" y="150" width="12" height="500"/><rect x="693" y="150" width="11.5" height="500"/><rect x="705.5" y="150" width="103.5" height="500"/><rect x="810" y="150" width="11.5" height="500"/><rect x="822.5" y="150" width="12.5" height="500"/><rect x="836" y="150" width="103.5" height="500"/><rect x="940.5" y="150" width="12" height="500"/><rect x="953.5" y="150" width="12" height="500"/><rect x="1070.5" y="150" width="12" height="500"/></clipPath><clipPath id="frm"><rect x="210.5" y="150" width="169" height="500"/><rect x="405.5" y="150" width="13" height="500"/><rect x="524" y="150" width="11.5" height="500"/><rect x="549" y="150" width="12" height="500"/><rect x="562" y="150" width="77.5" height="500"/><rect x="640.5" y="150" width="25" height="500"/><rect x="666.5" y="150" width="12" height="500"/><rect x="693" y="150" width="11.5" height="500"/><rect x="705.5" y="150" width="103.5" height="500"/><rect x="810" y="150" width="11.5" height="500"/><rect x="822.5" y="150" width="12.5" height="500"/><rect x="836" y="150" width="103.5" height="500"/><rect x="940.5" y="150" width="12" height="500"/><rect x="953.5" y="150" width="12" height="500"/><rect x="966.5" y="150" width="103" height="500"/><rect x="1070.5" y="150" width="12" height="500"/></clipPath></defs>
<g shape-rendering="auto"><use href="#tb" fill="#fafa1e"/><use href="#te" stroke="#fafa1e"/></g>
<g shape-rendering="auto" clip-path="url(#frm)"><use href="#te" stroke="#f8f8c0"/></g>
<g shape-rendering="auto" clip-path="url(#pale)"><use href="#tb" fill="#f2f28a"/><use href="#te" stroke="#f6f6c8"/></g>
<g font-family="Liberation Sans, sans-serif" font-size="11" fill="#f2f2f2">
<text x="647" y="154" text-anchor="middle">Message Identifier = 0x0f</text>
<text x="295" y="169" text-anchor="middle">Break</text>
<text x="411.5" y="169" text-anchor="middle">S</text>
<text x="471" y="169" text-anchor="middle">Synch = 0x55</text>
<text x="530" y="169" text-anchor="middle">T</text>
<text x="555" y="169" text-anchor="middle">S</text>
<text x="601" y="169" text-anchor="middle">ID = 0x0f</text>
<text x="653" y="169" text-anchor="middle">0x03</text>
<text x="672.5" y="169" text-anchor="middle">T</text>
<text x="698.5" y="169" text-anchor="middle">S</text>
<text x="757" y="169" text-anchor="middle" fill="#d6f4ff">Data Byte = 0xce</text>
<text x="816" y="169" text-anchor="middle">T</text>
<text x="829" y="169" text-anchor="middle">S</text>
<text x="888" y="169" text-anchor="middle" fill="#d6f4ff">Data Byte = 0x5a</text>
<text x="946.5" y="169" text-anchor="middle">T</text>
<text x="959.5" y="169" text-anchor="middle">S</text>
<text x="1019.5" y="169" text-anchor="middle" fill="#eaeaff">Checksum = 0xd6</text>
<text x="1076.5" y="169" text-anchor="middle">T</text>
</g>
<text x="4.5" y="649" font-family="Liberation Sans, sans-serif" font-size="10" fill="#e0dc88">Z1</text>
<rect x="7" y="651" width="10" height="1.5" fill="#e0dc88"/><rect x="7" y="649" width="1" height="3" fill="#e0dc88"/>
<path d="M379.5,686 L383.5,694 L375.5,694 Z" fill="#f0f020" shape-rendering="auto"/>
</svg>
<div id="top">
<div class="btn" style="left:4px;width:51px"><svg style="left:-1px;top:-1px" width="51" height="26"><path d="M9.5,2.8 L10.6,4.4 H11.6 L13.2,6.8 H5.8 L7.4,4.4 H8.4 Z" fill="#dedede"/><rect x="4.9" y="7.8" width="9.2" height="10" rx="1" fill="none" stroke="#e0e0e0" stroke-width="2"/><rect x="6.4" y="10" width="6.2" height="3.4" fill="#9a9a9a"/><rect x="6.4" y="13.4" width="6.2" height="3.4" fill="#1a1a1a"/></svg><span style="left:20px">File</span></div>
<div class="btn" style="left:62px;width:69px"><svg style="left:-1px;top:-1px" width="69" height="26"><path d="M9.4,4.9 L13,8.6 H11 V14.2 H13 L9.4,17.9 L5.8,14.2 H7.8 V8.6 H5.8 Z" fill="#f6f6f6"/></svg><span style="letter-spacing:0;left:21px">Vertical</span></div>
<div class="btn" style="left:138px;width:88px"><svg style="left:-1px;top:-1px" width="88" height="26"><path d="M4,11.85 L8,8 V10.4 H14 V8 L18,11.85 L14,15.7 V13.3 H8 V15.7 Z" fill="#e2e2e2"/></svg><span style="">Timebase</span></div>
<div class="btn" style="left:232px;width:71px"><svg style="left:-1px;top:-1px" width="71" height="26"><path d="M9.7,4.8 H12.2 V17.9 H9.7 Z" fill="#e0e0e0"/><path d="M11.5,4.8 L14.9,8.2 L11.5,11.2 Z" fill="#e0e0e0"/></svg><span style="">Trigger</span></div>
<div class="btn" style="left:309px;width:73px"><svg style="left:-1px;top:-1px" width="73" height="26"><rect x="5.9" y="8.5" width="11" height="7.7" rx="0.8" fill="none" stroke="#e8e8e8" stroke-width="1.8"/><path d="M7.6,14.5 L9,11.8 L10.3,12.9 L12.4,10.6 L14.6,12.7 L15.4,14.5 Z" fill="#e0e0e0"/></svg><span style="">Display</span></div>
<div class="btn" style="left:388px;width:77px"><svg style="left:-1px;top:-1px" width="77" height="26"><path d="M15.9,7 L13.6,14 L11.9,12.1 L8.9,15.6 L7.1,14 L10.1,10.6 L8.6,8.8 Z" fill="#e2e2e2"/></svg><span style="">Cursors</span></div>
<div class="btn" style="left:471px;width:80px"><svg style="left:-1px;top:-1px" width="80" height="26"><rect x="7.6" y="5.5" width="8" height="12" fill="none" stroke="#d8d8d8" stroke-width="1.3"/><path d="M8.4,7.8h2.6 M8.4,9.4h1.8 M8.4,11h3.4 M8.4,12.6h1.8 M8.4,14.2h2.6 M8.4,15.8h1.8" stroke="#c8c8c8" stroke-width="0.9"/></svg><span style="">Measure</span></div>
<div class="btn" style="left:557px;width:58px"><svg style="left:-1px;top:-1px" width="58" height="26"><rect x="5.2" y="6.4" width="11.4" height="11.5" rx="2" fill="#e2e2e2"/><rect x="6.6" y="8.2" width="8.6" height="2.6" fill="#1e1e1e"/><path d="M6.8,11.9h1.6v1h-1.6zM9.9,11.9h1.6v1h-1.6zM13,11.9h1.6v1h-1.6zM6.8,13.9h1.6v1h-1.6zM9.9,13.9h1.6v1h-1.6zM13,13.9h1.6v1h-1.6zM6.8,15.8h1.6v1h-1.6zM9.9,15.8h1.6v1h-1.6zM13,15.8h1.6v1h-1.6z" fill="#333"/></svg><span style="">Math</span></div>
<div class="btn" style="left:621px;width:77px"><svg style="left:-1px;top:-1px" width="77" height="26"><path d="M4.5,7 V17.3 H17" fill="none" stroke="#e6e6e6" stroke-width="1.4"/><path d="M6.2,14 L9.8,11.9 L11.6,13.4 L15.6,9.4" fill="none" stroke="#e2e2e2" stroke-width="1.6"/><path d="M13.2,8.5 L16.9,8.1 L16.6,11.8 Z" fill="#e6e6e6"/></svg><span style="">Analysis</span></div>
<div class="btn" style="left:705px;width:73px"><svg style="left:-1px;top:-1px" width="73" height="26"><path d="M6.5,8.2 L15.4,16.6" stroke="#dedede" stroke-width="2.3" stroke-linecap="round"/><path d="M16,7.3 L6.3,16.9" stroke="#d8d8d8" stroke-width="2.2" stroke-linecap="round"/><circle cx="6.9" cy="8.4" r="2.1" fill="#dedede"/><circle cx="14.9" cy="16.1" r="1.9" fill="#dedede"/><circle cx="14.9" cy="16.1" r="0.7" fill="#222"/><rect x="5.5" y="6.4" width="1.6" height="1.6" fill="#2b2b2b" transform="rotate(45 6.3 7.2)"/></svg><span style="">Utilities</span></div>
<div class="btn" style="left:784px;width:74px"><svg style="left:-1px;top:-1px" width="74" height="26"><circle cx="11.1" cy="11.9" r="6.2" fill="#e0e0e0"/><rect x="10.2" y="9.6" width="1.8" height="1.6" fill="#1e1e1e"/><rect x="10.2" y="12.3" width="1.8" height="3.7" fill="#1e1e1e"/></svg><span style="">Support</span></div>
</div>
<div id="tbl">
<div id="rowsep"></div>
<div id="lin"><span style="position:absolute;left:2px;top:1px;font-weight:bold">LIN</span></div>
<span class="tx" style="left:0;width:39px;top:17px;text-align:center">1</span>
<div class="c" style="left:39px;width:70px"><b>Time</b><i style="left:1px;text-align:left">-101.403&hellip;</i></div>
<div class="c" style="left:109px;width:50px"><b>Break</b><i style="left:0;right:0;text-align:center">0</i></div>
<div class="c" style="left:159px;width:50px"><b>Synch</b><i style="left:0;right:0;text-align:center">55</i></div>
<div class="c" style="left:209px;width:30px"><b>ID</b><i style="left:0;right:0;text-align:center">0f</i></div>
<div class="c" style="left:239px;width:41px"><b>Parity</b><i style="left:0;right:0;text-align:center">03</i></div>
<div class="c" style="left:280px;width:79px"><b>DataLength</b><i style="left:0;right:0;text-align:center">2</i></div>
<div class="c" style="left:359px;width:160px"><b>Data</b><i style="left:0;right:0;text-align:center">c7 5a</i></div>
<div class="c" style="left:519px;width:71px"><b>Checksum</b><i style="left:0;right:0;text-align:center">dd</i></div>
<div class="c" style="left:590px;width:79px"><b>Bit Rate</b><i style="left:0;right:0;text-align:center;letter-spacing:0;left:3px">19.034 kbit/s</i></div>
<div class="c" style="left:669px;width:90px"><b>Symbol</b><i style="left:0;right:0;text-align:center"></i></div>
</div>
<div id="drop"><svg width="30" height="32" style="position:absolute;left:-1px;top:-1px"><path d="M1,10 L27,10 L14,24 Z" fill="#f4f4f4"/></svg></div>
<div id="panel"></div>
<div id="z1"><div id="z1b">Z1</div>
<span class="tx" style="right:0px;top:0px">zoom(C1)</span>
<span class="tx" style="right:0px;top:18px">2.00 V/div</span>
<span class="tx" style="right:0px;top:32px">500 &micro;s/div</span>
</div>
<div class="box" style="left:1064px;width:110px">
<div class="hdr"></div>
<b class="tx" style="left:3px;top:0px">Timebase</b><span class="tx" style="right:1px;top:0px">12.4 ms</span>
<span class="tx" style="right:2px;top:17px">20.0 ms/div</span>
<span class="tx" style="left:2px;top:30px">1 MS</span><span class="tx" style="right:4px;top:30px">5 MS/s</span>
</div>
<div class="box" style="left:1179px;width:95px">
<div class="hdr"></div>
<b class="tx" style="left:1px;top:0px">Trigger</b><span class="tx" style="right:3px;top:1px;background:#000;border-radius:3px;padding:0 3px;line-height:13px;font-size:11px">DC</span>
<span class="tx" style="left:1px;top:17px">Stop</span><span class="tx" style="right:3px;top:17px">5.00 V</span>
<span class="tx" style="left:1px;top:30px">LIN</span>
</div>
<div id="green"></div>
<div id="foot">
<span class="tx" style="left:7px;top:-1px;font-size:15px;color:#e6e6e6;font-weight:bold;transform:scaleX(0.83);transform-origin:0 0">TELEDYNE</span><span class="tx" style="left:78px;top:-1px;font-size:15px;color:#dedede;transform:scaleX(0.73);transform-origin:0 0">LECROY</span>
<span class="tx" style="left:1153px;top:1px;font-size:12px;color:#f0f0f0">1/2/2014 3:44:02 PM</span>
</div>
</body></html>
